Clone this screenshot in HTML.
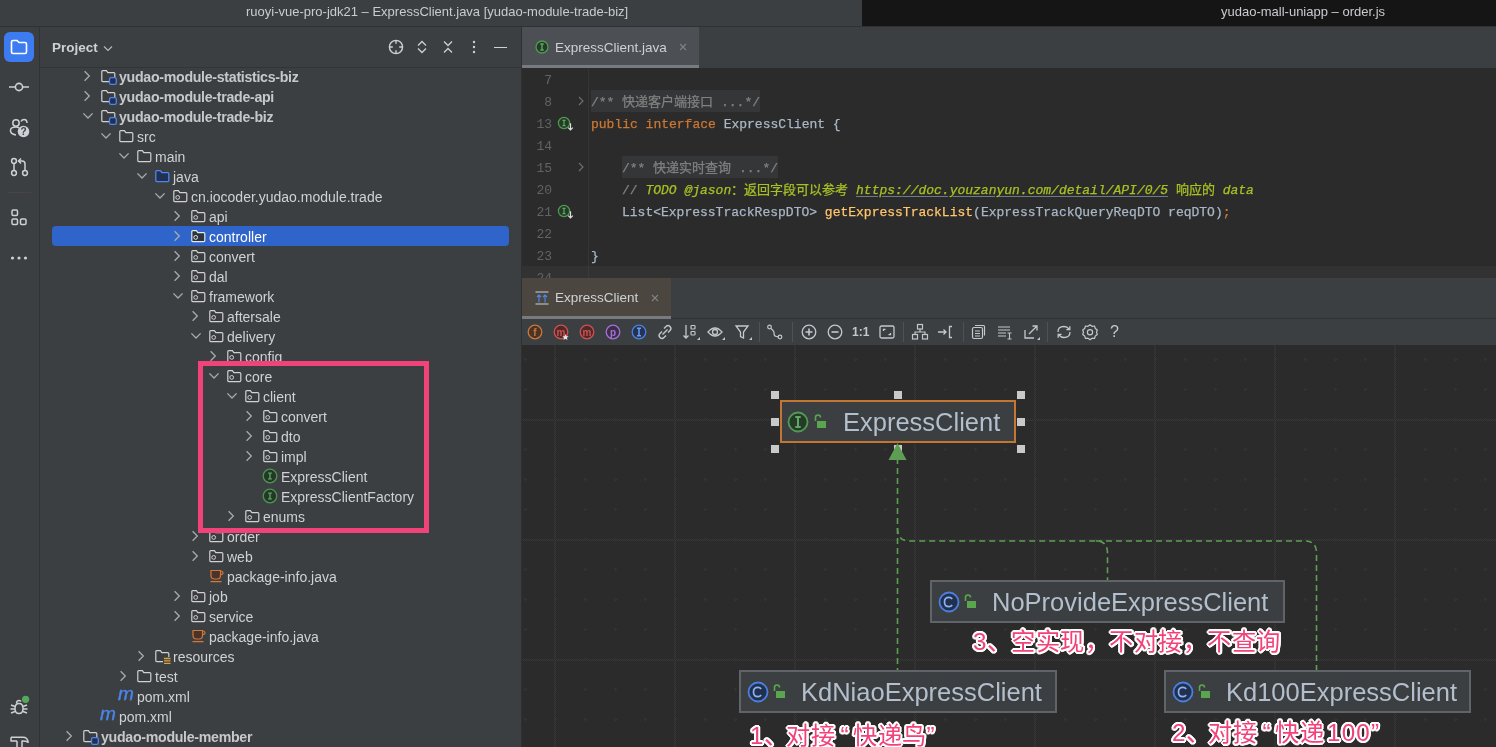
<!DOCTYPE html>
<html lang="zh-CN"><head><meta charset="utf-8"><style>
*{box-sizing:border-box;margin:0;padding:0}
html,body{width:1496px;height:747px;overflow:hidden;background:#3c3f41;font-family:"Liberation Sans",sans-serif;position:relative}
.a{position:absolute}
.tt,.rt,.mono,.ln,.dn,.ann,div.a{will-change:transform}
svg{position:absolute;overflow:visible}
.tt{position:absolute;font-size:13px;color:#c9cbcf;white-space:nowrap;line-height:15px}
.rt{position:absolute;font-size:14px;color:#cfd1d4;white-space:nowrap;line-height:16px}
.rb{font-weight:bold;font-size:14.2px;letter-spacing:-0.3px;color:#c6c8cb!important}
.mono{position:absolute;font-family:"Liberation Mono",monospace;font-size:13px;white-space:pre;line-height:16px;-webkit-text-stroke:0.25px currentColor}
.ln{position:absolute;font-family:"Liberation Mono",monospace;font-size:13px;color:#606366;text-align:right;width:40px;line-height:16px}
.dn{position:absolute;font-size:25.5px;color:#b3bfcd;white-space:nowrap;line-height:28px}
.ann{position:absolute;font-size:24.2px;letter-spacing:0.5px;font-weight:400;color:#f2427a;white-space:nowrap;line-height:28px;text-shadow:2.00px 0.00px 0 #fff,1.85px 0.77px 0 #fff,1.41px 1.41px 0 #fff,0.77px 1.85px 0 #fff,0.00px 2.00px 0 #fff,-0.77px 1.85px 0 #fff,-1.41px 1.41px 0 #fff,-1.85px 0.77px 0 #fff,-2.00px 0.00px 0 #fff,-1.85px -0.77px 0 #fff,-1.41px -1.41px 0 #fff,-0.77px -1.85px 0 #fff,-0.00px -2.00px 0 #fff,0.77px -1.85px 0 #fff,1.41px -1.41px 0 #fff,1.85px -0.77px 0 #fff,0.92px 0.38px 0 #fff,0.38px 0.92px 0 #fff,-0.38px 0.92px 0 #fff,-0.92px 0.38px 0 #fff,-0.92px -0.38px 0 #fff,-0.38px -0.92px 0 #fff,0.38px -0.92px 0 #fff,0.92px -0.38px 0 #fff}
.q{display:inline-block}
</style></head><body>
<div class="a" style="left:0;top:0;width:862px;height:26px;background:#3c3f41"></div>
<div class="a" style="left:862px;top:0;width:634px;height:26px;background:#151515"></div>
<div class="a" style="left:0;top:26px;width:1496px;height:1px;background:#2f3133"></div>
<div class="tt" style="left:246px;top:4px">ruoyi-vue-pro-jdk21 – ExpressClient.java [yudao-module-trade-biz]</div>
<div class="tt" style="left:1221px;top:4px">yudao-mall-uniapp – order.js</div>
<div class="a" style="left:39px;top:27px;width:1px;height:720px;background:#313335"></div>
<div class="a" style="left:4px;top:32px;width:30px;height:30px;background:#3d7cf0;border-radius:6px"></div>
<svg style="left:10px;top:39px" width="18" height="16" viewBox="0 0 18 16"><path d="M1.5 3 Q1.5 1.5 3 1.5 L7 1.5 L9 3.5 L15 3.5 Q16.5 3.5 16.5 5 L16.5 13 Q16.5 14.5 15 14.5 L3 14.5 Q1.5 14.5 1.5 13 Z" fill="none" stroke="#fff" stroke-width="1.6"/></svg>
<svg style="left:9px;top:80px" width="21" height="14" viewBox="0 0 21 14"><path d="M0 7 H6 M14 7 H20" stroke="#cdd0d4" stroke-width="1.6"/><circle cx="10" cy="7" r="3.6" fill="none" stroke="#cdd0d4" stroke-width="1.6"/></svg>
<svg style="left:9px;top:117px" width="22" height="22" viewBox="0 0 22 22"><circle cx="7" cy="6" r="3.2" fill="none" stroke="#cdd0d4" stroke-width="1.5"/><path d="M12 4.5 Q13 2.5 15 2.5 Q18 2.5 18 6" fill="none" stroke="#cdd0d4" stroke-width="1.5"/><path d="M7 18 Q1 17 1.5 13 Q2 10 7 10 Q9 10 10 11" fill="none" stroke="#cdd0d4" stroke-width="1.5"/><circle cx="14.5" cy="14.5" r="5.8" fill="#cdd0d4"/><text x="14.5" y="18.3" font-size="10" font-weight="bold" text-anchor="middle" fill="#3c3f41" font-family="Liberation Sans">?</text></svg>
<svg style="left:9px;top:156px" width="22" height="22" viewBox="0 0 22 22"><circle cx="5" cy="5" r="2.4" fill="none" stroke="#cdd0d4" stroke-width="1.5"/><circle cx="5" cy="17" r="2.4" fill="none" stroke="#cdd0d4" stroke-width="1.5"/><circle cx="16" cy="17" r="2.4" fill="none" stroke="#cdd0d4" stroke-width="1.5"/><path d="M5 7.4 V14.6 M16 14.6 V8 Q16 5 13 5 H10 M12 2.5 L9.5 5 L12 7.5" fill="none" stroke="#cdd0d4" stroke-width="1.5"/></svg>
<div class="a" style="left:8px;top:192px;width:23px;height:1px;background:#4a4446"></div>
<svg style="left:9px;top:207px" width="22" height="22" viewBox="0 0 22 22"><rect x="3" y="3" width="5.5" height="5.5" rx="1.2" fill="none" stroke="#cdd0d4" stroke-width="1.5"/><rect x="3" y="12" width="5.5" height="5.5" rx="1.2" fill="none" stroke="#cdd0d4" stroke-width="1.5"/><rect x="11.5" y="12" width="5.5" height="5.5" rx="1.2" fill="none" stroke="#cdd0d4" stroke-width="1.5"/></svg>
<svg style="left:9px;top:252px" width="22" height="12" viewBox="0 0 22 12"><circle cx="3.5" cy="6" r="1.6" fill="#cdd0d4"/><circle cx="10" cy="6" r="1.6" fill="#cdd0d4"/><circle cx="16.5" cy="6" r="1.6" fill="#cdd0d4"/></svg>
<svg style="left:8px;top:695px" width="24" height="24" viewBox="0 0 24 24"><path d="M11 18.5 Q7 18.5 7 13.5 Q7 8.5 11 8.5 Q15 8.5 15 13.5 Q15 18.5 11 18.5 Z" fill="none" stroke="#cdd0d4" stroke-width="1.5"/><path d="M8.5 8.5 Q8.5 5.5 11 5.5 Q12.5 5.5 13 6.5 M3 10 L7 11.5 M2.5 14 H7 M3 18 L7 16.5 M19 10 L15 11.5 M19.5 14 H15 M19 18 L15 16.5" fill="none" stroke="#cdd0d4" stroke-width="1.5"/><circle cx="17.6" cy="4.3" r="3.6" fill="#57a85c"/></svg>
<svg style="left:9px;top:733px" width="22" height="16" viewBox="0 0 22 16"><path d="M2 4.2 H14 Q18.5 4.2 19.2 9.3 Q17 8 14 8 H13 V16 M8 8 V16 M2 4.2 V8 H8" fill="none" stroke="#cdd0d4" stroke-width="1.5" stroke-linejoin="round"/></svg>
<div class="a" style="left:52px;top:40px;font-size:13.5px;font-weight:bold;color:#cfd1d4;line-height:16px">Project</div>
<svg style="left:103px;top:45px" width="10" height="7" viewBox="0 0 10 7"><path d="M1 1.5 L5 5.5 L9 1.5" fill="none" stroke="#b4b7bb" stroke-width="1.2"/></svg>
<div class="a" style="left:40px;top:67px;width:481px;height:1px;background:#323436"></div>
<svg style="left:388px;top:39px" width="16" height="16" viewBox="0 0 16 16"><circle cx="8" cy="8" r="6.6" fill="none" stroke="#cdd0d4" stroke-width="1.4"/><path d="M8 1.5 V4.8 M8 11.2 V14.5 M1.5 8 H4.8 M11.2 8 H14.5" stroke="#cdd0d4" stroke-width="1.4"/></svg>
<svg style="left:416px;top:39px" width="12" height="16" viewBox="0 0 12 16"><path d="M2 6.5 L6 2.5 L10 6.5 M2 9.5 L6 13.5 L10 9.5" fill="none" stroke="#cdd0d4" stroke-width="1.3"/></svg>
<svg style="left:442px;top:39px" width="12" height="16" viewBox="0 0 12 16"><path d="M2 2.5 L6 6.5 L10 2.5 M2 13.5 L6 9.5 L10 13.5" fill="none" stroke="#cdd0d4" stroke-width="1.3"/></svg>
<svg style="left:470px;top:39px" width="8" height="16" viewBox="0 0 8 16"><circle cx="4" cy="3" r="1.2" fill="#cdd0d4"/><circle cx="4" cy="8" r="1.2" fill="#cdd0d4"/><circle cx="4" cy="13" r="1.2" fill="#cdd0d4"/></svg>
<div class="a" style="left:494px;top:46.5px;width:13px;height:1.2px;background:#cdd0d4"></div>
<div class="a" style="left:52px;top:226px;width:457px;height:20px;background:#2f65ca;border-radius:4px"></div>
<svg class="a" style="left:81px;top:70px" width="12" height="12" viewBox="0 0 12 12"><path d="M3.6 1.3 L8.3 6 L3.6 10.7" fill="none" stroke="#a8abb0" stroke-width="1.3"/></svg>
<svg class="a" style="left:101px;top:68px" width="16" height="16" viewBox="0 0 16 16"><path d="M0.8 3.6 Q0.8 2.6 1.8 2.6 L5.4 2.6 L6.8 4.6 L12.8 4.6 Q13.8 4.6 13.8 5.6 L13.8 12.6 Q13.8 13.6 12.8 13.6 L1.8 13.6 Q0.8 13.6 0.8 12.6 Z" fill="#3a3c3f" stroke="#cfd1d4" stroke-width="1.2"/><rect x="8.5" y="9.6" width="6.8" height="6.8" rx="1.6" fill="#233052" stroke="#4d87f0" stroke-width="1.3"/></svg>
<div class="rt rb" style="left:119px;top:69px;color:#cfd1d4">yudao-module-statistics-biz</div>
<svg class="a" style="left:81px;top:90px" width="12" height="12" viewBox="0 0 12 12"><path d="M3.6 1.3 L8.3 6 L3.6 10.7" fill="none" stroke="#a8abb0" stroke-width="1.3"/></svg>
<svg class="a" style="left:101px;top:88px" width="16" height="16" viewBox="0 0 16 16"><path d="M0.8 3.6 Q0.8 2.6 1.8 2.6 L5.4 2.6 L6.8 4.6 L12.8 4.6 Q13.8 4.6 13.8 5.6 L13.8 12.6 Q13.8 13.6 12.8 13.6 L1.8 13.6 Q0.8 13.6 0.8 12.6 Z" fill="#3a3c3f" stroke="#cfd1d4" stroke-width="1.2"/><rect x="8.5" y="9.6" width="6.8" height="6.8" rx="1.6" fill="#233052" stroke="#4d87f0" stroke-width="1.3"/></svg>
<div class="rt rb" style="left:119px;top:89px;color:#cfd1d4">yudao-module-trade-api</div>
<svg class="a" style="left:81px;top:110px" width="12" height="12" viewBox="0 0 12 12"><path d="M2.4 3.4 L7 8 L11.6 3.4" fill="none" stroke="#a8abb0" stroke-width="1.3"/></svg>
<svg class="a" style="left:101px;top:108px" width="16" height="16" viewBox="0 0 16 16"><path d="M0.8 3.6 Q0.8 2.6 1.8 2.6 L5.4 2.6 L6.8 4.6 L12.8 4.6 Q13.8 4.6 13.8 5.6 L13.8 12.6 Q13.8 13.6 12.8 13.6 L1.8 13.6 Q0.8 13.6 0.8 12.6 Z" fill="#3a3c3f" stroke="#cfd1d4" stroke-width="1.2"/><rect x="8.5" y="9.6" width="6.8" height="6.8" rx="1.6" fill="#233052" stroke="#4d87f0" stroke-width="1.3"/></svg>
<div class="rt rb" style="left:119px;top:109px;color:#cfd1d4">yudao-module-trade-biz</div>
<svg class="a" style="left:99px;top:130px" width="12" height="12" viewBox="0 0 12 12"><path d="M2.4 3.4 L7 8 L11.6 3.4" fill="none" stroke="#a8abb0" stroke-width="1.3"/></svg>
<svg class="a" style="left:119px;top:128px" width="16" height="16" viewBox="0 0 16 16"><path d="M0.8 3.6 Q0.8 2.6 1.8 2.6 L5.4 2.6 L6.8 4.6 L12.8 4.6 Q13.8 4.6 13.8 5.6 L13.8 12.6 Q13.8 13.6 12.8 13.6 L1.8 13.6 Q0.8 13.6 0.8 12.6 Z" fill="#3a3c3f" stroke="#cfd1d4" stroke-width="1.2"/></svg>
<div class="rt" style="left:137px;top:129px;color:#cfd1d4">src</div>
<svg class="a" style="left:117px;top:150px" width="12" height="12" viewBox="0 0 12 12"><path d="M2.4 3.4 L7 8 L11.6 3.4" fill="none" stroke="#a8abb0" stroke-width="1.3"/></svg>
<svg class="a" style="left:137px;top:148px" width="16" height="16" viewBox="0 0 16 16"><path d="M0.8 3.6 Q0.8 2.6 1.8 2.6 L5.4 2.6 L6.8 4.6 L12.8 4.6 Q13.8 4.6 13.8 5.6 L13.8 12.6 Q13.8 13.6 12.8 13.6 L1.8 13.6 Q0.8 13.6 0.8 12.6 Z" fill="#3a3c3f" stroke="#cfd1d4" stroke-width="1.2"/></svg>
<div class="rt" style="left:155px;top:149px;color:#cfd1d4">main</div>
<svg class="a" style="left:135px;top:170px" width="12" height="12" viewBox="0 0 12 12"><path d="M2.4 3.4 L7 8 L11.6 3.4" fill="none" stroke="#a8abb0" stroke-width="1.3"/></svg>
<svg class="a" style="left:155px;top:168px" width="16" height="16" viewBox="0 0 16 16"><path d="M0.8 3.6 Q0.8 2.6 1.8 2.6 L5.4 2.6 L6.8 4.6 L12.8 4.6 Q13.8 4.6 13.8 5.6 L13.8 12.6 Q13.8 13.6 12.8 13.6 L1.8 13.6 Q0.8 13.6 0.8 12.6 Z" fill="#233052" stroke="#4d87f0" stroke-width="1.3"/></svg>
<div class="rt" style="left:173px;top:169px;color:#cfd1d4">java</div>
<svg class="a" style="left:153px;top:190px" width="12" height="12" viewBox="0 0 12 12"><path d="M2.4 3.4 L7 8 L11.6 3.4" fill="none" stroke="#a8abb0" stroke-width="1.3"/></svg>
<svg class="a" style="left:173px;top:188px" width="16" height="16" viewBox="0 0 16 16"><path d="M0.8 3.6 Q0.8 2.6 1.8 2.6 L5.4 2.6 L6.8 4.6 L12.8 4.6 Q13.8 4.6 13.8 5.6 L13.8 12.6 Q13.8 13.6 12.8 13.6 L1.8 13.6 Q0.8 13.6 0.8 12.6 Z" fill="#3a3c3f" stroke="#cfd1d4" stroke-width="1.2"/><circle cx="4.7" cy="9.4" r="1.9" fill="none" stroke="#cfd1d4" stroke-width="1"/></svg>
<div class="rt" style="left:191px;top:189px;color:#cfd1d4">cn.iocoder.yudao.module.trade</div>
<svg class="a" style="left:171px;top:210px" width="12" height="12" viewBox="0 0 12 12"><path d="M3.6 1.3 L8.3 6 L3.6 10.7" fill="none" stroke="#a8abb0" stroke-width="1.3"/></svg>
<svg class="a" style="left:191px;top:208px" width="16" height="16" viewBox="0 0 16 16"><path d="M0.8 3.6 Q0.8 2.6 1.8 2.6 L5.4 2.6 L6.8 4.6 L12.8 4.6 Q13.8 4.6 13.8 5.6 L13.8 12.6 Q13.8 13.6 12.8 13.6 L1.8 13.6 Q0.8 13.6 0.8 12.6 Z" fill="#3a3c3f" stroke="#cfd1d4" stroke-width="1.2"/><circle cx="4.7" cy="9.4" r="1.9" fill="none" stroke="#cfd1d4" stroke-width="1"/></svg>
<div class="rt" style="left:209px;top:209px;color:#cfd1d4">api</div>
<svg class="a" style="left:171px;top:230px" width="12" height="12" viewBox="0 0 12 12"><path d="M3.6 1.3 L8.3 6 L3.6 10.7" fill="none" stroke="#a8abb0" stroke-width="1.3"/></svg>
<svg class="a" style="left:191px;top:228px" width="16" height="16" viewBox="0 0 16 16"><path d="M0.8 3.6 Q0.8 2.6 1.8 2.6 L5.4 2.6 L6.8 4.6 L12.8 4.6 Q13.8 4.6 13.8 5.6 L13.8 12.6 Q13.8 13.6 12.8 13.6 L1.8 13.6 Q0.8 13.6 0.8 12.6 Z" fill="#2c3440" stroke="#e6e8ea" stroke-width="1.2"/><circle cx="4.7" cy="9.4" r="1.9" fill="none" stroke="#e6e8ea" stroke-width="1"/></svg>
<div class="rt" style="left:209px;top:229px;color:#ffffff">controller</div>
<svg class="a" style="left:171px;top:250px" width="12" height="12" viewBox="0 0 12 12"><path d="M3.6 1.3 L8.3 6 L3.6 10.7" fill="none" stroke="#a8abb0" stroke-width="1.3"/></svg>
<svg class="a" style="left:191px;top:248px" width="16" height="16" viewBox="0 0 16 16"><path d="M0.8 3.6 Q0.8 2.6 1.8 2.6 L5.4 2.6 L6.8 4.6 L12.8 4.6 Q13.8 4.6 13.8 5.6 L13.8 12.6 Q13.8 13.6 12.8 13.6 L1.8 13.6 Q0.8 13.6 0.8 12.6 Z" fill="#3a3c3f" stroke="#cfd1d4" stroke-width="1.2"/><circle cx="4.7" cy="9.4" r="1.9" fill="none" stroke="#cfd1d4" stroke-width="1"/></svg>
<div class="rt" style="left:209px;top:249px;color:#cfd1d4">convert</div>
<svg class="a" style="left:171px;top:270px" width="12" height="12" viewBox="0 0 12 12"><path d="M3.6 1.3 L8.3 6 L3.6 10.7" fill="none" stroke="#a8abb0" stroke-width="1.3"/></svg>
<svg class="a" style="left:191px;top:268px" width="16" height="16" viewBox="0 0 16 16"><path d="M0.8 3.6 Q0.8 2.6 1.8 2.6 L5.4 2.6 L6.8 4.6 L12.8 4.6 Q13.8 4.6 13.8 5.6 L13.8 12.6 Q13.8 13.6 12.8 13.6 L1.8 13.6 Q0.8 13.6 0.8 12.6 Z" fill="#3a3c3f" stroke="#cfd1d4" stroke-width="1.2"/><circle cx="4.7" cy="9.4" r="1.9" fill="none" stroke="#cfd1d4" stroke-width="1"/></svg>
<div class="rt" style="left:209px;top:269px;color:#cfd1d4">dal</div>
<svg class="a" style="left:171px;top:290px" width="12" height="12" viewBox="0 0 12 12"><path d="M2.4 3.4 L7 8 L11.6 3.4" fill="none" stroke="#a8abb0" stroke-width="1.3"/></svg>
<svg class="a" style="left:191px;top:288px" width="16" height="16" viewBox="0 0 16 16"><path d="M0.8 3.6 Q0.8 2.6 1.8 2.6 L5.4 2.6 L6.8 4.6 L12.8 4.6 Q13.8 4.6 13.8 5.6 L13.8 12.6 Q13.8 13.6 12.8 13.6 L1.8 13.6 Q0.8 13.6 0.8 12.6 Z" fill="#3a3c3f" stroke="#cfd1d4" stroke-width="1.2"/><circle cx="4.7" cy="9.4" r="1.9" fill="none" stroke="#cfd1d4" stroke-width="1"/></svg>
<div class="rt" style="left:209px;top:289px;color:#cfd1d4">framework</div>
<svg class="a" style="left:189px;top:310px" width="12" height="12" viewBox="0 0 12 12"><path d="M3.6 1.3 L8.3 6 L3.6 10.7" fill="none" stroke="#a8abb0" stroke-width="1.3"/></svg>
<svg class="a" style="left:209px;top:308px" width="16" height="16" viewBox="0 0 16 16"><path d="M0.8 3.6 Q0.8 2.6 1.8 2.6 L5.4 2.6 L6.8 4.6 L12.8 4.6 Q13.8 4.6 13.8 5.6 L13.8 12.6 Q13.8 13.6 12.8 13.6 L1.8 13.6 Q0.8 13.6 0.8 12.6 Z" fill="#3a3c3f" stroke="#cfd1d4" stroke-width="1.2"/><circle cx="4.7" cy="9.4" r="1.9" fill="none" stroke="#cfd1d4" stroke-width="1"/></svg>
<div class="rt" style="left:227px;top:309px;color:#cfd1d4">aftersale</div>
<svg class="a" style="left:189px;top:330px" width="12" height="12" viewBox="0 0 12 12"><path d="M2.4 3.4 L7 8 L11.6 3.4" fill="none" stroke="#a8abb0" stroke-width="1.3"/></svg>
<svg class="a" style="left:209px;top:328px" width="16" height="16" viewBox="0 0 16 16"><path d="M0.8 3.6 Q0.8 2.6 1.8 2.6 L5.4 2.6 L6.8 4.6 L12.8 4.6 Q13.8 4.6 13.8 5.6 L13.8 12.6 Q13.8 13.6 12.8 13.6 L1.8 13.6 Q0.8 13.6 0.8 12.6 Z" fill="#3a3c3f" stroke="#cfd1d4" stroke-width="1.2"/><circle cx="4.7" cy="9.4" r="1.9" fill="none" stroke="#cfd1d4" stroke-width="1"/></svg>
<div class="rt" style="left:227px;top:329px;color:#cfd1d4">delivery</div>
<svg class="a" style="left:207px;top:350px" width="12" height="12" viewBox="0 0 12 12"><path d="M3.6 1.3 L8.3 6 L3.6 10.7" fill="none" stroke="#a8abb0" stroke-width="1.3"/></svg>
<svg class="a" style="left:227px;top:348px" width="16" height="16" viewBox="0 0 16 16"><path d="M0.8 3.6 Q0.8 2.6 1.8 2.6 L5.4 2.6 L6.8 4.6 L12.8 4.6 Q13.8 4.6 13.8 5.6 L13.8 12.6 Q13.8 13.6 12.8 13.6 L1.8 13.6 Q0.8 13.6 0.8 12.6 Z" fill="#3a3c3f" stroke="#cfd1d4" stroke-width="1.2"/><circle cx="4.7" cy="9.4" r="1.9" fill="none" stroke="#cfd1d4" stroke-width="1"/></svg>
<div class="rt" style="left:245px;top:349px;color:#cfd1d4">config</div>
<svg class="a" style="left:207px;top:370px" width="12" height="12" viewBox="0 0 12 12"><path d="M2.4 3.4 L7 8 L11.6 3.4" fill="none" stroke="#a8abb0" stroke-width="1.3"/></svg>
<svg class="a" style="left:227px;top:368px" width="16" height="16" viewBox="0 0 16 16"><path d="M0.8 3.6 Q0.8 2.6 1.8 2.6 L5.4 2.6 L6.8 4.6 L12.8 4.6 Q13.8 4.6 13.8 5.6 L13.8 12.6 Q13.8 13.6 12.8 13.6 L1.8 13.6 Q0.8 13.6 0.8 12.6 Z" fill="#3a3c3f" stroke="#cfd1d4" stroke-width="1.2"/><circle cx="4.7" cy="9.4" r="1.9" fill="none" stroke="#cfd1d4" stroke-width="1"/></svg>
<div class="rt" style="left:245px;top:369px;color:#cfd1d4">core</div>
<svg class="a" style="left:225px;top:390px" width="12" height="12" viewBox="0 0 12 12"><path d="M2.4 3.4 L7 8 L11.6 3.4" fill="none" stroke="#a8abb0" stroke-width="1.3"/></svg>
<svg class="a" style="left:245px;top:388px" width="16" height="16" viewBox="0 0 16 16"><path d="M0.8 3.6 Q0.8 2.6 1.8 2.6 L5.4 2.6 L6.8 4.6 L12.8 4.6 Q13.8 4.6 13.8 5.6 L13.8 12.6 Q13.8 13.6 12.8 13.6 L1.8 13.6 Q0.8 13.6 0.8 12.6 Z" fill="#3a3c3f" stroke="#cfd1d4" stroke-width="1.2"/><circle cx="4.7" cy="9.4" r="1.9" fill="none" stroke="#cfd1d4" stroke-width="1"/></svg>
<div class="rt" style="left:263px;top:389px;color:#cfd1d4">client</div>
<svg class="a" style="left:243px;top:410px" width="12" height="12" viewBox="0 0 12 12"><path d="M3.6 1.3 L8.3 6 L3.6 10.7" fill="none" stroke="#a8abb0" stroke-width="1.3"/></svg>
<svg class="a" style="left:263px;top:408px" width="16" height="16" viewBox="0 0 16 16"><path d="M0.8 3.6 Q0.8 2.6 1.8 2.6 L5.4 2.6 L6.8 4.6 L12.8 4.6 Q13.8 4.6 13.8 5.6 L13.8 12.6 Q13.8 13.6 12.8 13.6 L1.8 13.6 Q0.8 13.6 0.8 12.6 Z" fill="#3a3c3f" stroke="#cfd1d4" stroke-width="1.2"/><circle cx="4.7" cy="9.4" r="1.9" fill="none" stroke="#cfd1d4" stroke-width="1"/></svg>
<div class="rt" style="left:281px;top:409px;color:#cfd1d4">convert</div>
<svg class="a" style="left:243px;top:430px" width="12" height="12" viewBox="0 0 12 12"><path d="M3.6 1.3 L8.3 6 L3.6 10.7" fill="none" stroke="#a8abb0" stroke-width="1.3"/></svg>
<svg class="a" style="left:263px;top:428px" width="16" height="16" viewBox="0 0 16 16"><path d="M0.8 3.6 Q0.8 2.6 1.8 2.6 L5.4 2.6 L6.8 4.6 L12.8 4.6 Q13.8 4.6 13.8 5.6 L13.8 12.6 Q13.8 13.6 12.8 13.6 L1.8 13.6 Q0.8 13.6 0.8 12.6 Z" fill="#3a3c3f" stroke="#cfd1d4" stroke-width="1.2"/><circle cx="4.7" cy="9.4" r="1.9" fill="none" stroke="#cfd1d4" stroke-width="1"/></svg>
<div class="rt" style="left:281px;top:429px;color:#cfd1d4">dto</div>
<svg class="a" style="left:243px;top:450px" width="12" height="12" viewBox="0 0 12 12"><path d="M3.6 1.3 L8.3 6 L3.6 10.7" fill="none" stroke="#a8abb0" stroke-width="1.3"/></svg>
<svg class="a" style="left:263px;top:448px" width="16" height="16" viewBox="0 0 16 16"><path d="M0.8 3.6 Q0.8 2.6 1.8 2.6 L5.4 2.6 L6.8 4.6 L12.8 4.6 Q13.8 4.6 13.8 5.6 L13.8 12.6 Q13.8 13.6 12.8 13.6 L1.8 13.6 Q0.8 13.6 0.8 12.6 Z" fill="#3a3c3f" stroke="#cfd1d4" stroke-width="1.2"/><circle cx="4.7" cy="9.4" r="1.9" fill="none" stroke="#cfd1d4" stroke-width="1"/></svg>
<div class="rt" style="left:281px;top:449px;color:#cfd1d4">impl</div>
<svg class="a" style="left:263px;top:468px" width="16" height="16" viewBox="0 0 16 16"><circle cx="7" cy="8" r="6.8" fill="#243826" stroke="#4c944f" stroke-width="1.3"/><path d="M5.2 4.8 Q7 5.6 8.8 4.8 M7 5.2 V10.8 M5.2 11.2 Q7 10.4 8.8 11.2" fill="none" stroke="#5e9f62" stroke-width="1.4"/></svg>
<div class="rt" style="left:281px;top:469px;color:#cfd1d4">ExpressClient</div>
<svg class="a" style="left:263px;top:488px" width="16" height="16" viewBox="0 0 16 16"><circle cx="7" cy="8" r="6.8" fill="#243826" stroke="#4c944f" stroke-width="1.3"/><path d="M5.2 4.8 Q7 5.6 8.8 4.8 M7 5.2 V10.8 M5.2 11.2 Q7 10.4 8.8 11.2" fill="none" stroke="#5e9f62" stroke-width="1.4"/></svg>
<div class="rt" style="left:281px;top:489px;color:#cfd1d4">ExpressClientFactory</div>
<svg class="a" style="left:225px;top:510px" width="12" height="12" viewBox="0 0 12 12"><path d="M3.6 1.3 L8.3 6 L3.6 10.7" fill="none" stroke="#a8abb0" stroke-width="1.3"/></svg>
<svg class="a" style="left:245px;top:508px" width="16" height="16" viewBox="0 0 16 16"><path d="M0.8 3.6 Q0.8 2.6 1.8 2.6 L5.4 2.6 L6.8 4.6 L12.8 4.6 Q13.8 4.6 13.8 5.6 L13.8 12.6 Q13.8 13.6 12.8 13.6 L1.8 13.6 Q0.8 13.6 0.8 12.6 Z" fill="#3a3c3f" stroke="#cfd1d4" stroke-width="1.2"/><circle cx="4.7" cy="9.4" r="1.9" fill="none" stroke="#cfd1d4" stroke-width="1"/></svg>
<div class="rt" style="left:263px;top:509px;color:#cfd1d4">enums</div>
<svg class="a" style="left:189px;top:530px" width="12" height="12" viewBox="0 0 12 12"><path d="M3.6 1.3 L8.3 6 L3.6 10.7" fill="none" stroke="#a8abb0" stroke-width="1.3"/></svg>
<svg class="a" style="left:209px;top:528px" width="16" height="16" viewBox="0 0 16 16"><path d="M0.8 3.6 Q0.8 2.6 1.8 2.6 L5.4 2.6 L6.8 4.6 L12.8 4.6 Q13.8 4.6 13.8 5.6 L13.8 12.6 Q13.8 13.6 12.8 13.6 L1.8 13.6 Q0.8 13.6 0.8 12.6 Z" fill="#3a3c3f" stroke="#cfd1d4" stroke-width="1.2"/><circle cx="4.7" cy="9.4" r="1.9" fill="none" stroke="#cfd1d4" stroke-width="1"/></svg>
<div class="rt" style="left:227px;top:529px;color:#cfd1d4">order</div>
<svg class="a" style="left:189px;top:550px" width="12" height="12" viewBox="0 0 12 12"><path d="M3.6 1.3 L8.3 6 L3.6 10.7" fill="none" stroke="#a8abb0" stroke-width="1.3"/></svg>
<svg class="a" style="left:209px;top:548px" width="16" height="16" viewBox="0 0 16 16"><path d="M0.8 3.6 Q0.8 2.6 1.8 2.6 L5.4 2.6 L6.8 4.6 L12.8 4.6 Q13.8 4.6 13.8 5.6 L13.8 12.6 Q13.8 13.6 12.8 13.6 L1.8 13.6 Q0.8 13.6 0.8 12.6 Z" fill="#3a3c3f" stroke="#cfd1d4" stroke-width="1.2"/><circle cx="4.7" cy="9.4" r="1.9" fill="none" stroke="#cfd1d4" stroke-width="1"/></svg>
<div class="rt" style="left:227px;top:549px;color:#cfd1d4">web</div>
<svg class="a" style="left:209px;top:568px" width="16" height="16" viewBox="0 0 16 16"><path d="M2 2.5 H11.5 V7.5 Q11.5 11 8 11 H5.5 Q2 11 2 7.5 Z" fill="#4a3328" stroke="#d4773a" stroke-width="1.2"/><path d="M11.5 3 Q14 3 14 5 Q14 6.5 11.5 6.5" fill="none" stroke="#d4773a" stroke-width="1.1"/><path d="M1.5 13.6 H12.5" stroke="#d4773a" stroke-width="1.3"/></svg>
<div class="rt" style="left:227px;top:569px;color:#cfd1d4">package-info.java</div>
<svg class="a" style="left:171px;top:590px" width="12" height="12" viewBox="0 0 12 12"><path d="M3.6 1.3 L8.3 6 L3.6 10.7" fill="none" stroke="#a8abb0" stroke-width="1.3"/></svg>
<svg class="a" style="left:191px;top:588px" width="16" height="16" viewBox="0 0 16 16"><path d="M0.8 3.6 Q0.8 2.6 1.8 2.6 L5.4 2.6 L6.8 4.6 L12.8 4.6 Q13.8 4.6 13.8 5.6 L13.8 12.6 Q13.8 13.6 12.8 13.6 L1.8 13.6 Q0.8 13.6 0.8 12.6 Z" fill="#3a3c3f" stroke="#cfd1d4" stroke-width="1.2"/><circle cx="4.7" cy="9.4" r="1.9" fill="none" stroke="#cfd1d4" stroke-width="1"/></svg>
<div class="rt" style="left:209px;top:589px;color:#cfd1d4">job</div>
<svg class="a" style="left:171px;top:610px" width="12" height="12" viewBox="0 0 12 12"><path d="M3.6 1.3 L8.3 6 L3.6 10.7" fill="none" stroke="#a8abb0" stroke-width="1.3"/></svg>
<svg class="a" style="left:191px;top:608px" width="16" height="16" viewBox="0 0 16 16"><path d="M0.8 3.6 Q0.8 2.6 1.8 2.6 L5.4 2.6 L6.8 4.6 L12.8 4.6 Q13.8 4.6 13.8 5.6 L13.8 12.6 Q13.8 13.6 12.8 13.6 L1.8 13.6 Q0.8 13.6 0.8 12.6 Z" fill="#3a3c3f" stroke="#cfd1d4" stroke-width="1.2"/><circle cx="4.7" cy="9.4" r="1.9" fill="none" stroke="#cfd1d4" stroke-width="1"/></svg>
<div class="rt" style="left:209px;top:609px;color:#cfd1d4">service</div>
<svg class="a" style="left:191px;top:628px" width="16" height="16" viewBox="0 0 16 16"><path d="M2 2.5 H11.5 V7.5 Q11.5 11 8 11 H5.5 Q2 11 2 7.5 Z" fill="#4a3328" stroke="#d4773a" stroke-width="1.2"/><path d="M11.5 3 Q14 3 14 5 Q14 6.5 11.5 6.5" fill="none" stroke="#d4773a" stroke-width="1.1"/><path d="M1.5 13.6 H12.5" stroke="#d4773a" stroke-width="1.3"/></svg>
<div class="rt" style="left:209px;top:629px;color:#cfd1d4">package-info.java</div>
<svg class="a" style="left:135px;top:650px" width="12" height="12" viewBox="0 0 12 12"><path d="M3.6 1.3 L8.3 6 L3.6 10.7" fill="none" stroke="#a8abb0" stroke-width="1.3"/></svg>
<svg class="a" style="left:155px;top:648px" width="16" height="16" viewBox="0 0 16 16"><path d="M0.8 3.6 Q0.8 2.6 1.8 2.6 L5.4 2.6 L6.8 4.6 L12.8 4.6 Q13.8 4.6 13.8 5.6 L13.8 12.6 Q13.8 13.6 12.8 13.6 L1.8 13.6 Q0.8 13.6 0.8 12.6 Z" fill="#3a3c3f" stroke="#cfd1d4" stroke-width="1.2"/><rect x="8" y="9" width="8.5" height="8" fill="#3c3f41"/><path d="M9 10.5 H15.5 M9 12.9 H15.5 M9 15.3 H15.5" stroke="#d9a343" stroke-width="1.3"/></svg>
<div class="rt" style="left:173px;top:649px;color:#cfd1d4">resources</div>
<svg class="a" style="left:117px;top:670px" width="12" height="12" viewBox="0 0 12 12"><path d="M3.6 1.3 L8.3 6 L3.6 10.7" fill="none" stroke="#a8abb0" stroke-width="1.3"/></svg>
<svg class="a" style="left:137px;top:668px" width="16" height="16" viewBox="0 0 16 16"><path d="M0.8 3.6 Q0.8 2.6 1.8 2.6 L5.4 2.6 L6.8 4.6 L12.8 4.6 Q13.8 4.6 13.8 5.6 L13.8 12.6 Q13.8 13.6 12.8 13.6 L1.8 13.6 Q0.8 13.6 0.8 12.6 Z" fill="#3a3c3f" stroke="#cfd1d4" stroke-width="1.2"/></svg>
<div class="rt" style="left:155px;top:669px;color:#cfd1d4">test</div>
<div class="a" style="left:118px;top:684px;font:italic 19px 'Liberation Sans';color:#4a86e8;line-height:20px;-webkit-text-stroke:0.4px #4a86e8">m</div>
<div class="rt" style="left:137px;top:689px;color:#cfd1d4">pom.xml</div>
<div class="a" style="left:100px;top:704px;font:italic 19px 'Liberation Sans';color:#4a86e8;line-height:20px;-webkit-text-stroke:0.4px #4a86e8">m</div>
<div class="rt" style="left:119px;top:709px;color:#cfd1d4">pom.xml</div>
<svg class="a" style="left:63px;top:730px" width="12" height="12" viewBox="0 0 12 12"><path d="M3.6 1.3 L8.3 6 L3.6 10.7" fill="none" stroke="#a8abb0" stroke-width="1.3"/></svg>
<svg class="a" style="left:83px;top:728px" width="16" height="16" viewBox="0 0 16 16"><path d="M0.8 3.6 Q0.8 2.6 1.8 2.6 L5.4 2.6 L6.8 4.6 L12.8 4.6 Q13.8 4.6 13.8 5.6 L13.8 12.6 Q13.8 13.6 12.8 13.6 L1.8 13.6 Q0.8 13.6 0.8 12.6 Z" fill="#3a3c3f" stroke="#cfd1d4" stroke-width="1.2"/><rect x="8.5" y="9.6" width="6.8" height="6.8" rx="1.6" fill="#233052" stroke="#4d87f0" stroke-width="1.3"/></svg>
<div class="rt rb" style="left:101px;top:729px;color:#cfd1d4">yudao-module-member</div>
<div class="a" style="left:198px;top:361px;width:231px;height:172px;border:5px solid #f2427a"></div>
<div class="a" style="left:521px;top:27px;width:1px;height:720px;background:#2e3032"></div>
<div class="a" style="left:522px;top:27px;width:974px;height:41px;background:#3c3f41"></div>
<div class="a" style="left:522px;top:27px;width:177px;height:38px;background:#4c4f53"></div>
<div class="a" style="left:522px;top:65px;width:177px;height:3px;background:#777b80"></div>
<svg style="left:535px;top:40px" width="14" height="14" viewBox="0 0 14 14"><circle cx="7" cy="7" r="6" fill="#253b27" stroke="#4f9b52" stroke-width="1.3"/><path d="M5.3 4 H8.7 M7 4 V10 M5.3 10 H8.7" stroke="#62a765" stroke-width="1.4"/></svg>
<div class="tt" style="left:555px;top:40px;color:#cfd1d4;font-size:13.5px">ExpressClient.java</div>
<svg style="left:679px;top:43px" width="8" height="8" viewBox="0 0 8 8"><path d="M1 1 L7 7 M7 1 L1 7" stroke="#7f8286" stroke-width="1.1"/></svg>
<div class="a" style="left:522px;top:68px;width:974px;height:198px;background:#2b2b2b"></div>
<div class="a" style="left:588px;top:68px;width:1px;height:198px;background:#353535"></div>
<div class="a" style="left:522px;top:266px;width:974px;height:12px;background:#323232"></div>
<div class="a" style="left:588px;top:266px;width:1px;height:12px;background:#3a3a3a"></div>
<div class="ln" style="left:512px;top:73px">7</div>
<div class="ln" style="left:512px;top:95px">8</div>
<div class="ln" style="left:512px;top:117px">13</div>
<div class="ln" style="left:512px;top:139px">14</div>
<div class="ln" style="left:512px;top:161px">15</div>
<div class="ln" style="left:512px;top:183px">20</div>
<div class="ln" style="left:512px;top:205px">21</div>
<div class="ln" style="left:512px;top:227px">22</div>
<div class="ln" style="left:512px;top:249px">23</div>
<div class="ln" style="left:512px;top:271px;height:7px;overflow:hidden">24</div>
<svg style="left:577px;top:96px" width="8" height="10" viewBox="0 0 8 10"><path d="M2 1 L6 5 L2 9" fill="none" stroke="#6e7174" stroke-width="1.1"/></svg>
<svg style="left:577px;top:162px" width="8" height="10" viewBox="0 0 8 10"><path d="M2 1 L6 5 L2 9" fill="none" stroke="#6e7174" stroke-width="1.1"/></svg>
<svg style="left:557px;top:116px" width="18" height="18" viewBox="0 0 18 18"><circle cx="7" cy="7" r="5.6" fill="#253b27" stroke="#4f9b52" stroke-width="1.2"/><path d="M5.5 4.3 H8.5 M7 4.3 V9.7 M5.5 9.7 H8.5" stroke="#62a765" stroke-width="1.2"/><path d="M13.5 7.2 V14 M11.2 11.7 L13.5 14 L15.8 11.7" fill="none" stroke="#e0e0e0" stroke-width="1.2"/></svg>
<svg style="left:557px;top:204px" width="18" height="18" viewBox="0 0 18 18"><circle cx="7" cy="7" r="5.6" fill="#253b27" stroke="#4f9b52" stroke-width="1.2"/><path d="M5.5 4.3 H8.5 M7 4.3 V9.7 M5.5 9.7 H8.5" stroke="#62a765" stroke-width="1.2"/><path d="M13.5 7.2 V14 M11.2 11.7 L13.5 14 L15.8 11.7" fill="none" stroke="#e0e0e0" stroke-width="1.2"/></svg>
<div class="a" style="left:591px;top:90px;width:169px;height:22px;background:#353637"></div>
<div class="mono" style="left:591px;top:95px"><span style="color:#808080;">/** 快递客户端接口 ...*/</span></div>
<div class="mono" style="left:591px;top:117px"><span style="color:#cc7832;">public </span><span style="color:#cc7832;">interface </span><span style="color:#a9b7c6;">ExpressClient {</span></div>
<div class="a" style="left:622px;top:156px;width:156px;height:22px;background:#353637"></div>
<div class="mono" style="left:622.2px;top:161px"><span style="color:#808080;">/** 快递实时查询 ...*/</span></div>
<div class="mono" style="left:622.2px;top:183px"><span style="color:#808080;">// </span><span style="color:#a8c023;font-style:italic;">TODO @jason</span><span style="color:#a8c023;">：返回字段可以参考 </span><span style="color:#a8c023;font-style:italic;text-decoration:underline;text-underline-offset:2px;text-decoration-color:#6d7a8a;">https:</span><span style="color:#a8c023;font-style:italic;text-decoration:underline;text-underline-offset:2px;text-decoration-color:#6d7a8a">//doc.youzanyun.com/detail/API/0/5</span><span style="color:#a8c023;"> 响应的 </span><span style="color:#a8c023;font-style:italic;">data</span></div>
<div class="mono" style="left:622.2px;top:205px"><span style="color:#a9b7c6;">List&lt;ExpressTrackRespDTO&gt; </span><span style="color:#ffc66d;">getExpressTrackList</span><span style="color:#a9b7c6;">(ExpressTrackQueryReqDTO reqDTO)</span><span style="color:#cc7832;">;</span></div>
<div class="mono" style="left:591px;top:249px"><span style="color:#a9b7c6;">}</span></div>
<div class="a" style="left:522px;top:278px;width:974px;height:40px;background:#3c3f41"></div>
<div class="a" style="left:522px;top:318px;width:974px;height:1px;background:#323232"></div>
<div class="a" style="left:522px;top:278px;width:149px;height:38px;background:#4b4740"></div>
<div class="a" style="left:522px;top:316px;width:149px;height:3px;background:#777b80"></div>
<svg style="left:534px;top:290px" width="16" height="16" viewBox="0 0 16 16"><path d="M1.5 2 H14.5 M1.5 14 H14.5" stroke="#cfd1d4" stroke-width="1.2"/><path d="M5 12.5 V5 M3 7 L5 5 L7 7 M11 12.5 V5 M9 7 L11 5 L13 7" fill="none" stroke="#4a8af0" stroke-width="1.1"/></svg>
<div class="tt" style="left:555px;top:290px;color:#cfd1d4;font-size:13.5px">ExpressClient</div>
<svg style="left:651px;top:294px" width="8" height="8" viewBox="0 0 8 8"><path d="M1 1 L7 7 M7 1 L1 7" stroke="#7f8286" stroke-width="1.1"/></svg>
<div class="a" style="left:522px;top:319px;width:974px;height:26px;background:#3c3f41"></div>
<svg style="left:526.0px;top:323.0px" width="18" height="18" viewBox="0 0 18 18"><circle cx="9" cy="9" r="6.8" fill="#4a3426" stroke="#c9773b" stroke-width="1.3"/><text x="9" y="13" font-size="10" font-weight="bold" text-anchor="middle" fill="#c9773b" font-family="Liberation Sans">f</text></svg>
<svg style="left:552.0px;top:323.0px" width="18" height="18" viewBox="0 0 18 18"><circle cx="9" cy="9" r="6.8" fill="#4a2a2a" stroke="#d2504f" stroke-width="1.3"/><text x="9" y="12.5" font-size="10" font-weight="bold" text-anchor="middle" fill="#d2504f" font-family="Liberation Sans">m</text><path d="M13.5 11 L14.4 13.2 L16.7 13.3 L14.9 14.7 L15.5 17 L13.5 15.7 L11.5 17 L12.1 14.7 L10.3 13.3 L12.6 13.2 Z" fill="#e8e8e8"/></svg>
<svg style="left:578.0px;top:323.0px" width="18" height="18" viewBox="0 0 18 18"><circle cx="9" cy="9" r="6.8" fill="#4a2a2a" stroke="#d2504f" stroke-width="1.3"/><text x="9" y="12.5" font-size="10" font-weight="bold" text-anchor="middle" fill="#d2504f" font-family="Liberation Sans">m</text></svg>
<svg style="left:604.0px;top:323.0px" width="18" height="18" viewBox="0 0 18 18"><circle cx="9" cy="9" r="6.8" fill="#3a2f47" stroke="#a66fd6" stroke-width="1.3"/><text x="9" y="12.5" font-size="10" font-weight="bold" text-anchor="middle" fill="#a66fd6" font-family="Liberation Sans">p</text></svg>
<svg style="left:630.0px;top:323.0px" width="18" height="18" viewBox="0 0 18 18"><circle cx="9" cy="9" r="6.8" fill="#253252" stroke="#4a82e0" stroke-width="1.3"/><path d="M7 5.3 H11 M9 5.3 V12.7 M7 12.7 H11" stroke="#6b9ef0" stroke-width="1.5"/></svg>
<svg style="left:656.0px;top:323.0px" width="18" height="18" viewBox="0 0 18 18"><path d="M8 5.5 L10 3.5 Q12 1.5 14 3.5 Q16 5.5 14 7.5 L12 9.5 M10 12.5 L8 14.5 Q6 16.5 4 14.5 Q2 12.5 4 10.5 L6 8.5 M6.5 11.5 L11.5 6.5" fill="none" stroke="#c4c7cb" stroke-width="1.4"/></svg>
<svg style="left:682.0px;top:323.0px" width="20" height="18" viewBox="0 0 20 18"><path d="M4 2 V15 M1.5 12.5 L4 15 L6.5 12.5" fill="none" stroke="#c4c7cb" stroke-width="1.3"/><rect x="9" y="2.5" width="4" height="3.5" rx="0.8" fill="none" stroke="#c4c7cb" stroke-width="1.2"/><rect x="9" y="8.5" width="4" height="3.5" rx="0.8" fill="none" stroke="#c4c7cb" stroke-width="1.2"/><path d="M15 17 H18 V14 Z" fill="#c4c7cb"/></svg>
<svg style="left:707.0px;top:323.0px" width="20" height="18" viewBox="0 0 20 18"><path d="M1 9 Q8 1 15 9 Q8 17 1 9 Z" fill="none" stroke="#c4c7cb" stroke-width="1.3"/><circle cx="8" cy="9" r="2.5" fill="none" stroke="#c4c7cb" stroke-width="1.3"/><path d="M15 17 H18 V14 Z" fill="#c4c7cb"/></svg>
<svg style="left:734.0px;top:323.0px" width="20" height="18" viewBox="0 0 20 18"><path d="M2 3 H14 L9.5 9 V15 L6.5 13.5 V9 Z" fill="none" stroke="#c4c7cb" stroke-width="1.3"/><path d="M15 17 H18 V14 Z" fill="#c4c7cb"/></svg>
<div class="a" style="left:759px;top:322px;width:1px;height:20px;background:#4e5155"></div>
<div class="a" style="left:792px;top:322px;width:1px;height:20px;background:#4e5155"></div>
<div class="a" style="left:903px;top:322px;width:1px;height:20px;background:#4e5155"></div>
<div class="a" style="left:963px;top:322px;width:1px;height:20px;background:#4e5155"></div>
<div class="a" style="left:1047px;top:322px;width:1px;height:20px;background:#4e5155"></div>
<svg style="left:766.0px;top:323.0px" width="18" height="18" viewBox="0 0 18 18"><circle cx="3.5" cy="4" r="1.8" fill="none" stroke="#c4c7cb" stroke-width="1.2"/><circle cx="14" cy="14" r="1.8" fill="none" stroke="#c4c7cb" stroke-width="1.2"/><path d="M5 5.5 Q9 9 8 11 Q8 13.5 12.2 13.8" fill="none" stroke="#c4c7cb" stroke-width="1.2"/></svg>
<svg style="left:799.5px;top:323.0px" width="18" height="18" viewBox="0 0 18 18"><circle cx="9" cy="9" r="6.8" fill="none" stroke="#c4c7cb" stroke-width="1.3"/><path d="M5.5 9 H12.5 M9 5.5 V12.5" stroke="#c4c7cb" stroke-width="1.6"/></svg>
<svg style="left:825.5px;top:323.0px" width="18" height="18" viewBox="0 0 18 18"><circle cx="9" cy="9" r="6.8" fill="none" stroke="#c4c7cb" stroke-width="1.3"/><path d="M5.5 9 H12.5" stroke="#c4c7cb" stroke-width="1.6"/></svg>
<div class="a" style="left:852px;top:325px;font-size:12px;font-weight:bold;color:#c4c7cb;line-height:14px">1:1</div>
<svg style="left:877.5px;top:323.0px" width="18" height="18" viewBox="0 0 18 18"><rect x="2" y="3" width="14" height="12" rx="1.5" fill="none" stroke="#c4c7cb" stroke-width="1.3"/><path d="M5.5 8 V6.3 H7.5 M12.5 10 V11.7 H10.5" fill="none" stroke="#c4c7cb" stroke-width="1.3"/></svg>
<svg style="left:911.0px;top:323.0px" width="18" height="18" viewBox="0 0 18 18"><rect x="6.5" y="1.5" width="5" height="4.5" fill="none" stroke="#c4c7cb" stroke-width="1.2"/><rect x="1.5" y="11.5" width="5" height="4.5" fill="none" stroke="#c4c7cb" stroke-width="1.2"/><rect x="11.5" y="11.5" width="5" height="4.5" fill="none" stroke="#c4c7cb" stroke-width="1.2"/><path d="M9 6 V9 H4 V11.5 M9 9 H14 V11.5" fill="none" stroke="#c4c7cb" stroke-width="1.2"/></svg>
<svg style="left:937.0px;top:323.0px" width="18" height="18" viewBox="0 0 18 18"><path d="M1 9 H9 M6.5 6.5 L9 9 L6.5 11.5 M15 3.5 H12.5 V14.5 H15" fill="none" stroke="#c4c7cb" stroke-width="1.3"/></svg>
<svg style="left:969.5px;top:323.0px" width="18" height="18" viewBox="0 0 18 18"><rect x="2.5" y="4.5" width="10" height="11" rx="1.5" fill="none" stroke="#c4c7cb" stroke-width="1.2"/><path d="M5 2.5 H13.5 Q14.5 2.5 14.5 3.5 V12.5" fill="none" stroke="#c4c7cb" stroke-width="1.2"/><path d="M5 8 H10 M5 10.5 H10 M5 13 H10" stroke="#c4c7cb" stroke-width="1.1"/></svg>
<svg style="left:996.0px;top:323.0px" width="18" height="18" viewBox="0 0 18 18"><path d="M2 4 H14 M2 7 H14 M2 10 H10 M2 13 H10" stroke="#c4c7cb" stroke-width="1.2"/><path d="M11.5 10 H15.5 M13.5 10 V16 M11.5 16 H15.5" stroke="#c4c7cb" stroke-width="1.1"/></svg>
<svg style="left:1023.0px;top:323.0px" width="18" height="18" viewBox="0 0 18 18"><path d="M2 7 V15 H11" fill="none" stroke="#c4c7cb" stroke-width="1.3"/><path d="M6 11 L14 3 M9.5 3 H14 V7.5" fill="none" stroke="#c4c7cb" stroke-width="1.3"/><path d="M14 17 H17 V14 Z" fill="#c4c7cb"/></svg>
<svg style="left:1055.0px;top:323.0px" width="18" height="18" viewBox="0 0 18 18"><path d="M3 9 Q3 3.5 9 3.5 Q12 3.5 14 6 M15 9 Q15 14.5 9 14.5 Q6 14.5 4 12" fill="none" stroke="#c4c7cb" stroke-width="1.3"/><path d="M14.8 3.2 V6.6 H11.4 M3.2 14.8 V11.4 H6.6" fill="none" stroke="#c4c7cb" stroke-width="1.3"/></svg>
<svg style="left:1081.0px;top:323.0px" width="18" height="18" viewBox="0 0 18 18"><path d="M9 1.8 L11 3.3 L13.5 3 L14.3 5.5 L16.3 7 L15.5 9.3 L16.3 11.5 L14.3 13 L13.5 15.5 L11 15.2 L9 16.7 L7 15.2 L4.5 15.5 L3.7 13 L1.7 11.5 L2.5 9.3 L1.7 7 L3.7 5.5 L4.5 3 L7 3.3 Z" fill="none" stroke="#c4c7cb" stroke-width="1.2" stroke-linejoin="round"/><circle cx="9" cy="9.2" r="2.6" fill="none" stroke="#c4c7cb" stroke-width="1.2"/></svg>
<div class="a" style="left:1110px;top:323px;font-size:16px;color:#c4c7cb;line-height:18px">?</div>
<div class="a" style="left:522px;top:345px;width:974px;height:402px;background:#2b2b2b"></div>
<svg style="left:522px;top:345px" width="974" height="402" viewBox="0 0 974 402"><line x1="32.5" y1="0" x2="32.5" y2="402" stroke="#383838" stroke-width="1" stroke-dasharray="1 1" shape-rendering="crispEdges"/><line x1="33.5" y1="1" x2="33.5" y2="402" stroke="#383838" stroke-width="1" stroke-dasharray="1 1" shape-rendering="crispEdges"/><line x1="152.5" y1="0" x2="152.5" y2="402" stroke="#383838" stroke-width="1" stroke-dasharray="1 1" shape-rendering="crispEdges"/><line x1="153.5" y1="1" x2="153.5" y2="402" stroke="#383838" stroke-width="1" stroke-dasharray="1 1" shape-rendering="crispEdges"/><line x1="272.5" y1="0" x2="272.5" y2="402" stroke="#383838" stroke-width="1" stroke-dasharray="1 1" shape-rendering="crispEdges"/><line x1="273.5" y1="1" x2="273.5" y2="402" stroke="#383838" stroke-width="1" stroke-dasharray="1 1" shape-rendering="crispEdges"/><line x1="392.5" y1="0" x2="392.5" y2="402" stroke="#383838" stroke-width="1" stroke-dasharray="1 1" shape-rendering="crispEdges"/><line x1="393.5" y1="1" x2="393.5" y2="402" stroke="#383838" stroke-width="1" stroke-dasharray="1 1" shape-rendering="crispEdges"/><line x1="512.5" y1="0" x2="512.5" y2="402" stroke="#383838" stroke-width="1" stroke-dasharray="1 1" shape-rendering="crispEdges"/><line x1="513.5" y1="1" x2="513.5" y2="402" stroke="#383838" stroke-width="1" stroke-dasharray="1 1" shape-rendering="crispEdges"/><line x1="632.5" y1="0" x2="632.5" y2="402" stroke="#383838" stroke-width="1" stroke-dasharray="1 1" shape-rendering="crispEdges"/><line x1="633.5" y1="1" x2="633.5" y2="402" stroke="#383838" stroke-width="1" stroke-dasharray="1 1" shape-rendering="crispEdges"/><line x1="752.5" y1="0" x2="752.5" y2="402" stroke="#383838" stroke-width="1" stroke-dasharray="1 1" shape-rendering="crispEdges"/><line x1="753.5" y1="1" x2="753.5" y2="402" stroke="#383838" stroke-width="1" stroke-dasharray="1 1" shape-rendering="crispEdges"/><line x1="872.5" y1="0" x2="872.5" y2="402" stroke="#383838" stroke-width="1" stroke-dasharray="1 1" shape-rendering="crispEdges"/><line x1="873.5" y1="1" x2="873.5" y2="402" stroke="#383838" stroke-width="1" stroke-dasharray="1 1" shape-rendering="crispEdges"/><line x1="0" y1="74.5" x2="974" y2="74.5" stroke="#383838" stroke-width="1" stroke-dasharray="1 1" shape-rendering="crispEdges"/><line x1="1" y1="75.5" x2="974" y2="75.5" stroke="#383838" stroke-width="1" stroke-dasharray="1 1" shape-rendering="crispEdges"/><line x1="0" y1="194.5" x2="974" y2="194.5" stroke="#383838" stroke-width="1" stroke-dasharray="1 1" shape-rendering="crispEdges"/><line x1="1" y1="195.5" x2="974" y2="195.5" stroke="#383838" stroke-width="1" stroke-dasharray="1 1" shape-rendering="crispEdges"/><line x1="0" y1="314.5" x2="974" y2="314.5" stroke="#383838" stroke-width="1" stroke-dasharray="1 1" shape-rendering="crispEdges"/><line x1="1" y1="315.5" x2="974" y2="315.5" stroke="#383838" stroke-width="1" stroke-dasharray="1 1" shape-rendering="crispEdges"/><path d="M2 14h1v1h-1z M4 14h1v1h-1z M3 13h1v1h-1z M3 15h1v1h-1z M2 44h1v1h-1z M4 44h1v1h-1z M3 43h1v1h-1z M3 45h1v1h-1z M2 74h1v1h-1z M4 74h1v1h-1z M3 73h1v1h-1z M3 75h1v1h-1z M2 104h1v1h-1z M4 104h1v1h-1z M3 103h1v1h-1z M3 105h1v1h-1z M2 134h1v1h-1z M4 134h1v1h-1z M3 133h1v1h-1z M3 135h1v1h-1z M2 164h1v1h-1z M4 164h1v1h-1z M3 163h1v1h-1z M3 165h1v1h-1z M2 194h1v1h-1z M4 194h1v1h-1z M3 193h1v1h-1z M3 195h1v1h-1z M2 224h1v1h-1z M4 224h1v1h-1z M3 223h1v1h-1z M3 225h1v1h-1z M2 254h1v1h-1z M4 254h1v1h-1z M3 253h1v1h-1z M3 255h1v1h-1z M2 284h1v1h-1z M4 284h1v1h-1z M3 283h1v1h-1z M3 285h1v1h-1z M2 314h1v1h-1z M4 314h1v1h-1z M3 313h1v1h-1z M3 315h1v1h-1z M2 344h1v1h-1z M4 344h1v1h-1z M3 343h1v1h-1z M3 345h1v1h-1z M2 374h1v1h-1z M4 374h1v1h-1z M3 373h1v1h-1z M3 375h1v1h-1z M32 14h1v1h-1z M34 14h1v1h-1z M33 13h1v1h-1z M33 15h1v1h-1z M32 44h1v1h-1z M34 44h1v1h-1z M33 43h1v1h-1z M33 45h1v1h-1z M32 74h1v1h-1z M34 74h1v1h-1z M33 73h1v1h-1z M33 75h1v1h-1z M32 104h1v1h-1z M34 104h1v1h-1z M33 103h1v1h-1z M33 105h1v1h-1z M32 134h1v1h-1z M34 134h1v1h-1z M33 133h1v1h-1z M33 135h1v1h-1z M32 164h1v1h-1z M34 164h1v1h-1z M33 163h1v1h-1z M33 165h1v1h-1z M32 194h1v1h-1z M34 194h1v1h-1z M33 193h1v1h-1z M33 195h1v1h-1z M32 224h1v1h-1z M34 224h1v1h-1z M33 223h1v1h-1z M33 225h1v1h-1z M32 254h1v1h-1z M34 254h1v1h-1z M33 253h1v1h-1z M33 255h1v1h-1z M32 284h1v1h-1z M34 284h1v1h-1z M33 283h1v1h-1z M33 285h1v1h-1z M32 314h1v1h-1z M34 314h1v1h-1z M33 313h1v1h-1z M33 315h1v1h-1z M32 344h1v1h-1z M34 344h1v1h-1z M33 343h1v1h-1z M33 345h1v1h-1z M32 374h1v1h-1z M34 374h1v1h-1z M33 373h1v1h-1z M33 375h1v1h-1z M62 14h1v1h-1z M64 14h1v1h-1z M63 13h1v1h-1z M63 15h1v1h-1z M62 44h1v1h-1z M64 44h1v1h-1z M63 43h1v1h-1z M63 45h1v1h-1z M62 74h1v1h-1z M64 74h1v1h-1z M63 73h1v1h-1z M63 75h1v1h-1z M62 104h1v1h-1z M64 104h1v1h-1z M63 103h1v1h-1z M63 105h1v1h-1z M62 134h1v1h-1z M64 134h1v1h-1z M63 133h1v1h-1z M63 135h1v1h-1z M62 164h1v1h-1z M64 164h1v1h-1z M63 163h1v1h-1z M63 165h1v1h-1z M62 194h1v1h-1z M64 194h1v1h-1z M63 193h1v1h-1z M63 195h1v1h-1z M62 224h1v1h-1z M64 224h1v1h-1z M63 223h1v1h-1z M63 225h1v1h-1z M62 254h1v1h-1z M64 254h1v1h-1z M63 253h1v1h-1z M63 255h1v1h-1z M62 284h1v1h-1z M64 284h1v1h-1z M63 283h1v1h-1z M63 285h1v1h-1z M62 314h1v1h-1z M64 314h1v1h-1z M63 313h1v1h-1z M63 315h1v1h-1z M62 344h1v1h-1z M64 344h1v1h-1z M63 343h1v1h-1z M63 345h1v1h-1z M62 374h1v1h-1z M64 374h1v1h-1z M63 373h1v1h-1z M63 375h1v1h-1z M92 14h1v1h-1z M94 14h1v1h-1z M93 13h1v1h-1z M93 15h1v1h-1z M92 44h1v1h-1z M94 44h1v1h-1z M93 43h1v1h-1z M93 45h1v1h-1z M92 74h1v1h-1z M94 74h1v1h-1z M93 73h1v1h-1z M93 75h1v1h-1z M92 104h1v1h-1z M94 104h1v1h-1z M93 103h1v1h-1z M93 105h1v1h-1z M92 134h1v1h-1z M94 134h1v1h-1z M93 133h1v1h-1z M93 135h1v1h-1z M92 164h1v1h-1z M94 164h1v1h-1z M93 163h1v1h-1z M93 165h1v1h-1z M92 194h1v1h-1z M94 194h1v1h-1z M93 193h1v1h-1z M93 195h1v1h-1z M92 224h1v1h-1z M94 224h1v1h-1z M93 223h1v1h-1z M93 225h1v1h-1z M92 254h1v1h-1z M94 254h1v1h-1z M93 253h1v1h-1z M93 255h1v1h-1z M92 284h1v1h-1z M94 284h1v1h-1z M93 283h1v1h-1z M93 285h1v1h-1z M92 314h1v1h-1z M94 314h1v1h-1z M93 313h1v1h-1z M93 315h1v1h-1z M92 344h1v1h-1z M94 344h1v1h-1z M93 343h1v1h-1z M93 345h1v1h-1z M92 374h1v1h-1z M94 374h1v1h-1z M93 373h1v1h-1z M93 375h1v1h-1z M122 14h1v1h-1z M124 14h1v1h-1z M123 13h1v1h-1z M123 15h1v1h-1z M122 44h1v1h-1z M124 44h1v1h-1z M123 43h1v1h-1z M123 45h1v1h-1z M122 74h1v1h-1z M124 74h1v1h-1z M123 73h1v1h-1z M123 75h1v1h-1z M122 104h1v1h-1z M124 104h1v1h-1z M123 103h1v1h-1z M123 105h1v1h-1z M122 134h1v1h-1z M124 134h1v1h-1z M123 133h1v1h-1z M123 135h1v1h-1z M122 164h1v1h-1z M124 164h1v1h-1z M123 163h1v1h-1z M123 165h1v1h-1z M122 194h1v1h-1z M124 194h1v1h-1z M123 193h1v1h-1z M123 195h1v1h-1z M122 224h1v1h-1z M124 224h1v1h-1z M123 223h1v1h-1z M123 225h1v1h-1z M122 254h1v1h-1z M124 254h1v1h-1z M123 253h1v1h-1z M123 255h1v1h-1z M122 284h1v1h-1z M124 284h1v1h-1z M123 283h1v1h-1z M123 285h1v1h-1z M122 314h1v1h-1z M124 314h1v1h-1z M123 313h1v1h-1z M123 315h1v1h-1z M122 344h1v1h-1z M124 344h1v1h-1z M123 343h1v1h-1z M123 345h1v1h-1z M122 374h1v1h-1z M124 374h1v1h-1z M123 373h1v1h-1z M123 375h1v1h-1z M152 14h1v1h-1z M154 14h1v1h-1z M153 13h1v1h-1z M153 15h1v1h-1z M152 44h1v1h-1z M154 44h1v1h-1z M153 43h1v1h-1z M153 45h1v1h-1z M152 74h1v1h-1z M154 74h1v1h-1z M153 73h1v1h-1z M153 75h1v1h-1z M152 104h1v1h-1z M154 104h1v1h-1z M153 103h1v1h-1z M153 105h1v1h-1z M152 134h1v1h-1z M154 134h1v1h-1z M153 133h1v1h-1z M153 135h1v1h-1z M152 164h1v1h-1z M154 164h1v1h-1z M153 163h1v1h-1z M153 165h1v1h-1z M152 194h1v1h-1z M154 194h1v1h-1z M153 193h1v1h-1z M153 195h1v1h-1z M152 224h1v1h-1z M154 224h1v1h-1z M153 223h1v1h-1z M153 225h1v1h-1z M152 254h1v1h-1z M154 254h1v1h-1z M153 253h1v1h-1z M153 255h1v1h-1z M152 284h1v1h-1z M154 284h1v1h-1z M153 283h1v1h-1z M153 285h1v1h-1z M152 314h1v1h-1z M154 314h1v1h-1z M153 313h1v1h-1z M153 315h1v1h-1z M152 344h1v1h-1z M154 344h1v1h-1z M153 343h1v1h-1z M153 345h1v1h-1z M152 374h1v1h-1z M154 374h1v1h-1z M153 373h1v1h-1z M153 375h1v1h-1z M182 14h1v1h-1z M184 14h1v1h-1z M183 13h1v1h-1z M183 15h1v1h-1z M182 44h1v1h-1z M184 44h1v1h-1z M183 43h1v1h-1z M183 45h1v1h-1z M182 74h1v1h-1z M184 74h1v1h-1z M183 73h1v1h-1z M183 75h1v1h-1z M182 104h1v1h-1z M184 104h1v1h-1z M183 103h1v1h-1z M183 105h1v1h-1z M182 134h1v1h-1z M184 134h1v1h-1z M183 133h1v1h-1z M183 135h1v1h-1z M182 164h1v1h-1z M184 164h1v1h-1z M183 163h1v1h-1z M183 165h1v1h-1z M182 194h1v1h-1z M184 194h1v1h-1z M183 193h1v1h-1z M183 195h1v1h-1z M182 224h1v1h-1z M184 224h1v1h-1z M183 223h1v1h-1z M183 225h1v1h-1z M182 254h1v1h-1z M184 254h1v1h-1z M183 253h1v1h-1z M183 255h1v1h-1z M182 284h1v1h-1z M184 284h1v1h-1z M183 283h1v1h-1z M183 285h1v1h-1z M182 314h1v1h-1z M184 314h1v1h-1z M183 313h1v1h-1z M183 315h1v1h-1z M182 344h1v1h-1z M184 344h1v1h-1z M183 343h1v1h-1z M183 345h1v1h-1z M182 374h1v1h-1z M184 374h1v1h-1z M183 373h1v1h-1z M183 375h1v1h-1z M212 14h1v1h-1z M214 14h1v1h-1z M213 13h1v1h-1z M213 15h1v1h-1z M212 44h1v1h-1z M214 44h1v1h-1z M213 43h1v1h-1z M213 45h1v1h-1z M212 74h1v1h-1z M214 74h1v1h-1z M213 73h1v1h-1z M213 75h1v1h-1z M212 104h1v1h-1z M214 104h1v1h-1z M213 103h1v1h-1z M213 105h1v1h-1z M212 134h1v1h-1z M214 134h1v1h-1z M213 133h1v1h-1z M213 135h1v1h-1z M212 164h1v1h-1z M214 164h1v1h-1z M213 163h1v1h-1z M213 165h1v1h-1z M212 194h1v1h-1z M214 194h1v1h-1z M213 193h1v1h-1z M213 195h1v1h-1z M212 224h1v1h-1z M214 224h1v1h-1z M213 223h1v1h-1z M213 225h1v1h-1z M212 254h1v1h-1z M214 254h1v1h-1z M213 253h1v1h-1z M213 255h1v1h-1z M212 284h1v1h-1z M214 284h1v1h-1z M213 283h1v1h-1z M213 285h1v1h-1z M212 314h1v1h-1z M214 314h1v1h-1z M213 313h1v1h-1z M213 315h1v1h-1z M212 344h1v1h-1z M214 344h1v1h-1z M213 343h1v1h-1z M213 345h1v1h-1z M212 374h1v1h-1z M214 374h1v1h-1z M213 373h1v1h-1z M213 375h1v1h-1z M242 14h1v1h-1z M244 14h1v1h-1z M243 13h1v1h-1z M243 15h1v1h-1z M242 44h1v1h-1z M244 44h1v1h-1z M243 43h1v1h-1z M243 45h1v1h-1z M242 74h1v1h-1z M244 74h1v1h-1z M243 73h1v1h-1z M243 75h1v1h-1z M242 104h1v1h-1z M244 104h1v1h-1z M243 103h1v1h-1z M243 105h1v1h-1z M242 134h1v1h-1z M244 134h1v1h-1z M243 133h1v1h-1z M243 135h1v1h-1z M242 164h1v1h-1z M244 164h1v1h-1z M243 163h1v1h-1z M243 165h1v1h-1z M242 194h1v1h-1z M244 194h1v1h-1z M243 193h1v1h-1z M243 195h1v1h-1z M242 224h1v1h-1z M244 224h1v1h-1z M243 223h1v1h-1z M243 225h1v1h-1z M242 254h1v1h-1z M244 254h1v1h-1z M243 253h1v1h-1z M243 255h1v1h-1z M242 284h1v1h-1z M244 284h1v1h-1z M243 283h1v1h-1z M243 285h1v1h-1z M242 314h1v1h-1z M244 314h1v1h-1z M243 313h1v1h-1z M243 315h1v1h-1z M242 344h1v1h-1z M244 344h1v1h-1z M243 343h1v1h-1z M243 345h1v1h-1z M242 374h1v1h-1z M244 374h1v1h-1z M243 373h1v1h-1z M243 375h1v1h-1z M272 14h1v1h-1z M274 14h1v1h-1z M273 13h1v1h-1z M273 15h1v1h-1z M272 44h1v1h-1z M274 44h1v1h-1z M273 43h1v1h-1z M273 45h1v1h-1z M272 74h1v1h-1z M274 74h1v1h-1z M273 73h1v1h-1z M273 75h1v1h-1z M272 104h1v1h-1z M274 104h1v1h-1z M273 103h1v1h-1z M273 105h1v1h-1z M272 134h1v1h-1z M274 134h1v1h-1z M273 133h1v1h-1z M273 135h1v1h-1z M272 164h1v1h-1z M274 164h1v1h-1z M273 163h1v1h-1z M273 165h1v1h-1z M272 194h1v1h-1z M274 194h1v1h-1z M273 193h1v1h-1z M273 195h1v1h-1z M272 224h1v1h-1z M274 224h1v1h-1z M273 223h1v1h-1z M273 225h1v1h-1z M272 254h1v1h-1z M274 254h1v1h-1z M273 253h1v1h-1z M273 255h1v1h-1z M272 284h1v1h-1z M274 284h1v1h-1z M273 283h1v1h-1z M273 285h1v1h-1z M272 314h1v1h-1z M274 314h1v1h-1z M273 313h1v1h-1z M273 315h1v1h-1z M272 344h1v1h-1z M274 344h1v1h-1z M273 343h1v1h-1z M273 345h1v1h-1z M272 374h1v1h-1z M274 374h1v1h-1z M273 373h1v1h-1z M273 375h1v1h-1z M302 14h1v1h-1z M304 14h1v1h-1z M303 13h1v1h-1z M303 15h1v1h-1z M302 44h1v1h-1z M304 44h1v1h-1z M303 43h1v1h-1z M303 45h1v1h-1z M302 74h1v1h-1z M304 74h1v1h-1z M303 73h1v1h-1z M303 75h1v1h-1z M302 104h1v1h-1z M304 104h1v1h-1z M303 103h1v1h-1z M303 105h1v1h-1z M302 134h1v1h-1z M304 134h1v1h-1z M303 133h1v1h-1z M303 135h1v1h-1z M302 164h1v1h-1z M304 164h1v1h-1z M303 163h1v1h-1z M303 165h1v1h-1z M302 194h1v1h-1z M304 194h1v1h-1z M303 193h1v1h-1z M303 195h1v1h-1z M302 224h1v1h-1z M304 224h1v1h-1z M303 223h1v1h-1z M303 225h1v1h-1z M302 254h1v1h-1z M304 254h1v1h-1z M303 253h1v1h-1z M303 255h1v1h-1z M302 284h1v1h-1z M304 284h1v1h-1z M303 283h1v1h-1z M303 285h1v1h-1z M302 314h1v1h-1z M304 314h1v1h-1z M303 313h1v1h-1z M303 315h1v1h-1z M302 344h1v1h-1z M304 344h1v1h-1z M303 343h1v1h-1z M303 345h1v1h-1z M302 374h1v1h-1z M304 374h1v1h-1z M303 373h1v1h-1z M303 375h1v1h-1z M332 14h1v1h-1z M334 14h1v1h-1z M333 13h1v1h-1z M333 15h1v1h-1z M332 44h1v1h-1z M334 44h1v1h-1z M333 43h1v1h-1z M333 45h1v1h-1z M332 74h1v1h-1z M334 74h1v1h-1z M333 73h1v1h-1z M333 75h1v1h-1z M332 104h1v1h-1z M334 104h1v1h-1z M333 103h1v1h-1z M333 105h1v1h-1z M332 134h1v1h-1z M334 134h1v1h-1z M333 133h1v1h-1z M333 135h1v1h-1z M332 164h1v1h-1z M334 164h1v1h-1z M333 163h1v1h-1z M333 165h1v1h-1z M332 194h1v1h-1z M334 194h1v1h-1z M333 193h1v1h-1z M333 195h1v1h-1z M332 224h1v1h-1z M334 224h1v1h-1z M333 223h1v1h-1z M333 225h1v1h-1z M332 254h1v1h-1z M334 254h1v1h-1z M333 253h1v1h-1z M333 255h1v1h-1z M332 284h1v1h-1z M334 284h1v1h-1z M333 283h1v1h-1z M333 285h1v1h-1z M332 314h1v1h-1z M334 314h1v1h-1z M333 313h1v1h-1z M333 315h1v1h-1z M332 344h1v1h-1z M334 344h1v1h-1z M333 343h1v1h-1z M333 345h1v1h-1z M332 374h1v1h-1z M334 374h1v1h-1z M333 373h1v1h-1z M333 375h1v1h-1z M362 14h1v1h-1z M364 14h1v1h-1z M363 13h1v1h-1z M363 15h1v1h-1z M362 44h1v1h-1z M364 44h1v1h-1z M363 43h1v1h-1z M363 45h1v1h-1z M362 74h1v1h-1z M364 74h1v1h-1z M363 73h1v1h-1z M363 75h1v1h-1z M362 104h1v1h-1z M364 104h1v1h-1z M363 103h1v1h-1z M363 105h1v1h-1z M362 134h1v1h-1z M364 134h1v1h-1z M363 133h1v1h-1z M363 135h1v1h-1z M362 164h1v1h-1z M364 164h1v1h-1z M363 163h1v1h-1z M363 165h1v1h-1z M362 194h1v1h-1z M364 194h1v1h-1z M363 193h1v1h-1z M363 195h1v1h-1z M362 224h1v1h-1z M364 224h1v1h-1z M363 223h1v1h-1z M363 225h1v1h-1z M362 254h1v1h-1z M364 254h1v1h-1z M363 253h1v1h-1z M363 255h1v1h-1z M362 284h1v1h-1z M364 284h1v1h-1z M363 283h1v1h-1z M363 285h1v1h-1z M362 314h1v1h-1z M364 314h1v1h-1z M363 313h1v1h-1z M363 315h1v1h-1z M362 344h1v1h-1z M364 344h1v1h-1z M363 343h1v1h-1z M363 345h1v1h-1z M362 374h1v1h-1z M364 374h1v1h-1z M363 373h1v1h-1z M363 375h1v1h-1z M392 14h1v1h-1z M394 14h1v1h-1z M393 13h1v1h-1z M393 15h1v1h-1z M392 44h1v1h-1z M394 44h1v1h-1z M393 43h1v1h-1z M393 45h1v1h-1z M392 74h1v1h-1z M394 74h1v1h-1z M393 73h1v1h-1z M393 75h1v1h-1z M392 104h1v1h-1z M394 104h1v1h-1z M393 103h1v1h-1z M393 105h1v1h-1z M392 134h1v1h-1z M394 134h1v1h-1z M393 133h1v1h-1z M393 135h1v1h-1z M392 164h1v1h-1z M394 164h1v1h-1z M393 163h1v1h-1z M393 165h1v1h-1z M392 194h1v1h-1z M394 194h1v1h-1z M393 193h1v1h-1z M393 195h1v1h-1z M392 224h1v1h-1z M394 224h1v1h-1z M393 223h1v1h-1z M393 225h1v1h-1z M392 254h1v1h-1z M394 254h1v1h-1z M393 253h1v1h-1z M393 255h1v1h-1z M392 284h1v1h-1z M394 284h1v1h-1z M393 283h1v1h-1z M393 285h1v1h-1z M392 314h1v1h-1z M394 314h1v1h-1z M393 313h1v1h-1z M393 315h1v1h-1z M392 344h1v1h-1z M394 344h1v1h-1z M393 343h1v1h-1z M393 345h1v1h-1z M392 374h1v1h-1z M394 374h1v1h-1z M393 373h1v1h-1z M393 375h1v1h-1z M422 14h1v1h-1z M424 14h1v1h-1z M423 13h1v1h-1z M423 15h1v1h-1z M422 44h1v1h-1z M424 44h1v1h-1z M423 43h1v1h-1z M423 45h1v1h-1z M422 74h1v1h-1z M424 74h1v1h-1z M423 73h1v1h-1z M423 75h1v1h-1z M422 104h1v1h-1z M424 104h1v1h-1z M423 103h1v1h-1z M423 105h1v1h-1z M422 134h1v1h-1z M424 134h1v1h-1z M423 133h1v1h-1z M423 135h1v1h-1z M422 164h1v1h-1z M424 164h1v1h-1z M423 163h1v1h-1z M423 165h1v1h-1z M422 194h1v1h-1z M424 194h1v1h-1z M423 193h1v1h-1z M423 195h1v1h-1z M422 224h1v1h-1z M424 224h1v1h-1z M423 223h1v1h-1z M423 225h1v1h-1z M422 254h1v1h-1z M424 254h1v1h-1z M423 253h1v1h-1z M423 255h1v1h-1z M422 284h1v1h-1z M424 284h1v1h-1z M423 283h1v1h-1z M423 285h1v1h-1z M422 314h1v1h-1z M424 314h1v1h-1z M423 313h1v1h-1z M423 315h1v1h-1z M422 344h1v1h-1z M424 344h1v1h-1z M423 343h1v1h-1z M423 345h1v1h-1z M422 374h1v1h-1z M424 374h1v1h-1z M423 373h1v1h-1z M423 375h1v1h-1z M452 14h1v1h-1z M454 14h1v1h-1z M453 13h1v1h-1z M453 15h1v1h-1z M452 44h1v1h-1z M454 44h1v1h-1z M453 43h1v1h-1z M453 45h1v1h-1z M452 74h1v1h-1z M454 74h1v1h-1z M453 73h1v1h-1z M453 75h1v1h-1z M452 104h1v1h-1z M454 104h1v1h-1z M453 103h1v1h-1z M453 105h1v1h-1z M452 134h1v1h-1z M454 134h1v1h-1z M453 133h1v1h-1z M453 135h1v1h-1z M452 164h1v1h-1z M454 164h1v1h-1z M453 163h1v1h-1z M453 165h1v1h-1z M452 194h1v1h-1z M454 194h1v1h-1z M453 193h1v1h-1z M453 195h1v1h-1z M452 224h1v1h-1z M454 224h1v1h-1z M453 223h1v1h-1z M453 225h1v1h-1z M452 254h1v1h-1z M454 254h1v1h-1z M453 253h1v1h-1z M453 255h1v1h-1z M452 284h1v1h-1z M454 284h1v1h-1z M453 283h1v1h-1z M453 285h1v1h-1z M452 314h1v1h-1z M454 314h1v1h-1z M453 313h1v1h-1z M453 315h1v1h-1z M452 344h1v1h-1z M454 344h1v1h-1z M453 343h1v1h-1z M453 345h1v1h-1z M452 374h1v1h-1z M454 374h1v1h-1z M453 373h1v1h-1z M453 375h1v1h-1z M482 14h1v1h-1z M484 14h1v1h-1z M483 13h1v1h-1z M483 15h1v1h-1z M482 44h1v1h-1z M484 44h1v1h-1z M483 43h1v1h-1z M483 45h1v1h-1z M482 74h1v1h-1z M484 74h1v1h-1z M483 73h1v1h-1z M483 75h1v1h-1z M482 104h1v1h-1z M484 104h1v1h-1z M483 103h1v1h-1z M483 105h1v1h-1z M482 134h1v1h-1z M484 134h1v1h-1z M483 133h1v1h-1z M483 135h1v1h-1z M482 164h1v1h-1z M484 164h1v1h-1z M483 163h1v1h-1z M483 165h1v1h-1z M482 194h1v1h-1z M484 194h1v1h-1z M483 193h1v1h-1z M483 195h1v1h-1z M482 224h1v1h-1z M484 224h1v1h-1z M483 223h1v1h-1z M483 225h1v1h-1z M482 254h1v1h-1z M484 254h1v1h-1z M483 253h1v1h-1z M483 255h1v1h-1z M482 284h1v1h-1z M484 284h1v1h-1z M483 283h1v1h-1z M483 285h1v1h-1z M482 314h1v1h-1z M484 314h1v1h-1z M483 313h1v1h-1z M483 315h1v1h-1z M482 344h1v1h-1z M484 344h1v1h-1z M483 343h1v1h-1z M483 345h1v1h-1z M482 374h1v1h-1z M484 374h1v1h-1z M483 373h1v1h-1z M483 375h1v1h-1z M512 14h1v1h-1z M514 14h1v1h-1z M513 13h1v1h-1z M513 15h1v1h-1z M512 44h1v1h-1z M514 44h1v1h-1z M513 43h1v1h-1z M513 45h1v1h-1z M512 74h1v1h-1z M514 74h1v1h-1z M513 73h1v1h-1z M513 75h1v1h-1z M512 104h1v1h-1z M514 104h1v1h-1z M513 103h1v1h-1z M513 105h1v1h-1z M512 134h1v1h-1z M514 134h1v1h-1z M513 133h1v1h-1z M513 135h1v1h-1z M512 164h1v1h-1z M514 164h1v1h-1z M513 163h1v1h-1z M513 165h1v1h-1z M512 194h1v1h-1z M514 194h1v1h-1z M513 193h1v1h-1z M513 195h1v1h-1z M512 224h1v1h-1z M514 224h1v1h-1z M513 223h1v1h-1z M513 225h1v1h-1z M512 254h1v1h-1z M514 254h1v1h-1z M513 253h1v1h-1z M513 255h1v1h-1z M512 284h1v1h-1z M514 284h1v1h-1z M513 283h1v1h-1z M513 285h1v1h-1z M512 314h1v1h-1z M514 314h1v1h-1z M513 313h1v1h-1z M513 315h1v1h-1z M512 344h1v1h-1z M514 344h1v1h-1z M513 343h1v1h-1z M513 345h1v1h-1z M512 374h1v1h-1z M514 374h1v1h-1z M513 373h1v1h-1z M513 375h1v1h-1z M542 14h1v1h-1z M544 14h1v1h-1z M543 13h1v1h-1z M543 15h1v1h-1z M542 44h1v1h-1z M544 44h1v1h-1z M543 43h1v1h-1z M543 45h1v1h-1z M542 74h1v1h-1z M544 74h1v1h-1z M543 73h1v1h-1z M543 75h1v1h-1z M542 104h1v1h-1z M544 104h1v1h-1z M543 103h1v1h-1z M543 105h1v1h-1z M542 134h1v1h-1z M544 134h1v1h-1z M543 133h1v1h-1z M543 135h1v1h-1z M542 164h1v1h-1z M544 164h1v1h-1z M543 163h1v1h-1z M543 165h1v1h-1z M542 194h1v1h-1z M544 194h1v1h-1z M543 193h1v1h-1z M543 195h1v1h-1z M542 224h1v1h-1z M544 224h1v1h-1z M543 223h1v1h-1z M543 225h1v1h-1z M542 254h1v1h-1z M544 254h1v1h-1z M543 253h1v1h-1z M543 255h1v1h-1z M542 284h1v1h-1z M544 284h1v1h-1z M543 283h1v1h-1z M543 285h1v1h-1z M542 314h1v1h-1z M544 314h1v1h-1z M543 313h1v1h-1z M543 315h1v1h-1z M542 344h1v1h-1z M544 344h1v1h-1z M543 343h1v1h-1z M543 345h1v1h-1z M542 374h1v1h-1z M544 374h1v1h-1z M543 373h1v1h-1z M543 375h1v1h-1z M572 14h1v1h-1z M574 14h1v1h-1z M573 13h1v1h-1z M573 15h1v1h-1z M572 44h1v1h-1z M574 44h1v1h-1z M573 43h1v1h-1z M573 45h1v1h-1z M572 74h1v1h-1z M574 74h1v1h-1z M573 73h1v1h-1z M573 75h1v1h-1z M572 104h1v1h-1z M574 104h1v1h-1z M573 103h1v1h-1z M573 105h1v1h-1z M572 134h1v1h-1z M574 134h1v1h-1z M573 133h1v1h-1z M573 135h1v1h-1z M572 164h1v1h-1z M574 164h1v1h-1z M573 163h1v1h-1z M573 165h1v1h-1z M572 194h1v1h-1z M574 194h1v1h-1z M573 193h1v1h-1z M573 195h1v1h-1z M572 224h1v1h-1z M574 224h1v1h-1z M573 223h1v1h-1z M573 225h1v1h-1z M572 254h1v1h-1z M574 254h1v1h-1z M573 253h1v1h-1z M573 255h1v1h-1z M572 284h1v1h-1z M574 284h1v1h-1z M573 283h1v1h-1z M573 285h1v1h-1z M572 314h1v1h-1z M574 314h1v1h-1z M573 313h1v1h-1z M573 315h1v1h-1z M572 344h1v1h-1z M574 344h1v1h-1z M573 343h1v1h-1z M573 345h1v1h-1z M572 374h1v1h-1z M574 374h1v1h-1z M573 373h1v1h-1z M573 375h1v1h-1z M602 14h1v1h-1z M604 14h1v1h-1z M603 13h1v1h-1z M603 15h1v1h-1z M602 44h1v1h-1z M604 44h1v1h-1z M603 43h1v1h-1z M603 45h1v1h-1z M602 74h1v1h-1z M604 74h1v1h-1z M603 73h1v1h-1z M603 75h1v1h-1z M602 104h1v1h-1z M604 104h1v1h-1z M603 103h1v1h-1z M603 105h1v1h-1z M602 134h1v1h-1z M604 134h1v1h-1z M603 133h1v1h-1z M603 135h1v1h-1z M602 164h1v1h-1z M604 164h1v1h-1z M603 163h1v1h-1z M603 165h1v1h-1z M602 194h1v1h-1z M604 194h1v1h-1z M603 193h1v1h-1z M603 195h1v1h-1z M602 224h1v1h-1z M604 224h1v1h-1z M603 223h1v1h-1z M603 225h1v1h-1z M602 254h1v1h-1z M604 254h1v1h-1z M603 253h1v1h-1z M603 255h1v1h-1z M602 284h1v1h-1z M604 284h1v1h-1z M603 283h1v1h-1z M603 285h1v1h-1z M602 314h1v1h-1z M604 314h1v1h-1z M603 313h1v1h-1z M603 315h1v1h-1z M602 344h1v1h-1z M604 344h1v1h-1z M603 343h1v1h-1z M603 345h1v1h-1z M602 374h1v1h-1z M604 374h1v1h-1z M603 373h1v1h-1z M603 375h1v1h-1z M632 14h1v1h-1z M634 14h1v1h-1z M633 13h1v1h-1z M633 15h1v1h-1z M632 44h1v1h-1z M634 44h1v1h-1z M633 43h1v1h-1z M633 45h1v1h-1z M632 74h1v1h-1z M634 74h1v1h-1z M633 73h1v1h-1z M633 75h1v1h-1z M632 104h1v1h-1z M634 104h1v1h-1z M633 103h1v1h-1z M633 105h1v1h-1z M632 134h1v1h-1z M634 134h1v1h-1z M633 133h1v1h-1z M633 135h1v1h-1z M632 164h1v1h-1z M634 164h1v1h-1z M633 163h1v1h-1z M633 165h1v1h-1z M632 194h1v1h-1z M634 194h1v1h-1z M633 193h1v1h-1z M633 195h1v1h-1z M632 224h1v1h-1z M634 224h1v1h-1z M633 223h1v1h-1z M633 225h1v1h-1z M632 254h1v1h-1z M634 254h1v1h-1z M633 253h1v1h-1z M633 255h1v1h-1z M632 284h1v1h-1z M634 284h1v1h-1z M633 283h1v1h-1z M633 285h1v1h-1z M632 314h1v1h-1z M634 314h1v1h-1z M633 313h1v1h-1z M633 315h1v1h-1z M632 344h1v1h-1z M634 344h1v1h-1z M633 343h1v1h-1z M633 345h1v1h-1z M632 374h1v1h-1z M634 374h1v1h-1z M633 373h1v1h-1z M633 375h1v1h-1z M662 14h1v1h-1z M664 14h1v1h-1z M663 13h1v1h-1z M663 15h1v1h-1z M662 44h1v1h-1z M664 44h1v1h-1z M663 43h1v1h-1z M663 45h1v1h-1z M662 74h1v1h-1z M664 74h1v1h-1z M663 73h1v1h-1z M663 75h1v1h-1z M662 104h1v1h-1z M664 104h1v1h-1z M663 103h1v1h-1z M663 105h1v1h-1z M662 134h1v1h-1z M664 134h1v1h-1z M663 133h1v1h-1z M663 135h1v1h-1z M662 164h1v1h-1z M664 164h1v1h-1z M663 163h1v1h-1z M663 165h1v1h-1z M662 194h1v1h-1z M664 194h1v1h-1z M663 193h1v1h-1z M663 195h1v1h-1z M662 224h1v1h-1z M664 224h1v1h-1z M663 223h1v1h-1z M663 225h1v1h-1z M662 254h1v1h-1z M664 254h1v1h-1z M663 253h1v1h-1z M663 255h1v1h-1z M662 284h1v1h-1z M664 284h1v1h-1z M663 283h1v1h-1z M663 285h1v1h-1z M662 314h1v1h-1z M664 314h1v1h-1z M663 313h1v1h-1z M663 315h1v1h-1z M662 344h1v1h-1z M664 344h1v1h-1z M663 343h1v1h-1z M663 345h1v1h-1z M662 374h1v1h-1z M664 374h1v1h-1z M663 373h1v1h-1z M663 375h1v1h-1z M692 14h1v1h-1z M694 14h1v1h-1z M693 13h1v1h-1z M693 15h1v1h-1z M692 44h1v1h-1z M694 44h1v1h-1z M693 43h1v1h-1z M693 45h1v1h-1z M692 74h1v1h-1z M694 74h1v1h-1z M693 73h1v1h-1z M693 75h1v1h-1z M692 104h1v1h-1z M694 104h1v1h-1z M693 103h1v1h-1z M693 105h1v1h-1z M692 134h1v1h-1z M694 134h1v1h-1z M693 133h1v1h-1z M693 135h1v1h-1z M692 164h1v1h-1z M694 164h1v1h-1z M693 163h1v1h-1z M693 165h1v1h-1z M692 194h1v1h-1z M694 194h1v1h-1z M693 193h1v1h-1z M693 195h1v1h-1z M692 224h1v1h-1z M694 224h1v1h-1z M693 223h1v1h-1z M693 225h1v1h-1z M692 254h1v1h-1z M694 254h1v1h-1z M693 253h1v1h-1z M693 255h1v1h-1z M692 284h1v1h-1z M694 284h1v1h-1z M693 283h1v1h-1z M693 285h1v1h-1z M692 314h1v1h-1z M694 314h1v1h-1z M693 313h1v1h-1z M693 315h1v1h-1z M692 344h1v1h-1z M694 344h1v1h-1z M693 343h1v1h-1z M693 345h1v1h-1z M692 374h1v1h-1z M694 374h1v1h-1z M693 373h1v1h-1z M693 375h1v1h-1z M722 14h1v1h-1z M724 14h1v1h-1z M723 13h1v1h-1z M723 15h1v1h-1z M722 44h1v1h-1z M724 44h1v1h-1z M723 43h1v1h-1z M723 45h1v1h-1z M722 74h1v1h-1z M724 74h1v1h-1z M723 73h1v1h-1z M723 75h1v1h-1z M722 104h1v1h-1z M724 104h1v1h-1z M723 103h1v1h-1z M723 105h1v1h-1z M722 134h1v1h-1z M724 134h1v1h-1z M723 133h1v1h-1z M723 135h1v1h-1z M722 164h1v1h-1z M724 164h1v1h-1z M723 163h1v1h-1z M723 165h1v1h-1z M722 194h1v1h-1z M724 194h1v1h-1z M723 193h1v1h-1z M723 195h1v1h-1z M722 224h1v1h-1z M724 224h1v1h-1z M723 223h1v1h-1z M723 225h1v1h-1z M722 254h1v1h-1z M724 254h1v1h-1z M723 253h1v1h-1z M723 255h1v1h-1z M722 284h1v1h-1z M724 284h1v1h-1z M723 283h1v1h-1z M723 285h1v1h-1z M722 314h1v1h-1z M724 314h1v1h-1z M723 313h1v1h-1z M723 315h1v1h-1z M722 344h1v1h-1z M724 344h1v1h-1z M723 343h1v1h-1z M723 345h1v1h-1z M722 374h1v1h-1z M724 374h1v1h-1z M723 373h1v1h-1z M723 375h1v1h-1z M752 14h1v1h-1z M754 14h1v1h-1z M753 13h1v1h-1z M753 15h1v1h-1z M752 44h1v1h-1z M754 44h1v1h-1z M753 43h1v1h-1z M753 45h1v1h-1z M752 74h1v1h-1z M754 74h1v1h-1z M753 73h1v1h-1z M753 75h1v1h-1z M752 104h1v1h-1z M754 104h1v1h-1z M753 103h1v1h-1z M753 105h1v1h-1z M752 134h1v1h-1z M754 134h1v1h-1z M753 133h1v1h-1z M753 135h1v1h-1z M752 164h1v1h-1z M754 164h1v1h-1z M753 163h1v1h-1z M753 165h1v1h-1z M752 194h1v1h-1z M754 194h1v1h-1z M753 193h1v1h-1z M753 195h1v1h-1z M752 224h1v1h-1z M754 224h1v1h-1z M753 223h1v1h-1z M753 225h1v1h-1z M752 254h1v1h-1z M754 254h1v1h-1z M753 253h1v1h-1z M753 255h1v1h-1z M752 284h1v1h-1z M754 284h1v1h-1z M753 283h1v1h-1z M753 285h1v1h-1z M752 314h1v1h-1z M754 314h1v1h-1z M753 313h1v1h-1z M753 315h1v1h-1z M752 344h1v1h-1z M754 344h1v1h-1z M753 343h1v1h-1z M753 345h1v1h-1z M752 374h1v1h-1z M754 374h1v1h-1z M753 373h1v1h-1z M753 375h1v1h-1z M782 14h1v1h-1z M784 14h1v1h-1z M783 13h1v1h-1z M783 15h1v1h-1z M782 44h1v1h-1z M784 44h1v1h-1z M783 43h1v1h-1z M783 45h1v1h-1z M782 74h1v1h-1z M784 74h1v1h-1z M783 73h1v1h-1z M783 75h1v1h-1z M782 104h1v1h-1z M784 104h1v1h-1z M783 103h1v1h-1z M783 105h1v1h-1z M782 134h1v1h-1z M784 134h1v1h-1z M783 133h1v1h-1z M783 135h1v1h-1z M782 164h1v1h-1z M784 164h1v1h-1z M783 163h1v1h-1z M783 165h1v1h-1z M782 194h1v1h-1z M784 194h1v1h-1z M783 193h1v1h-1z M783 195h1v1h-1z M782 224h1v1h-1z M784 224h1v1h-1z M783 223h1v1h-1z M783 225h1v1h-1z M782 254h1v1h-1z M784 254h1v1h-1z M783 253h1v1h-1z M783 255h1v1h-1z M782 284h1v1h-1z M784 284h1v1h-1z M783 283h1v1h-1z M783 285h1v1h-1z M782 314h1v1h-1z M784 314h1v1h-1z M783 313h1v1h-1z M783 315h1v1h-1z M782 344h1v1h-1z M784 344h1v1h-1z M783 343h1v1h-1z M783 345h1v1h-1z M782 374h1v1h-1z M784 374h1v1h-1z M783 373h1v1h-1z M783 375h1v1h-1z M812 14h1v1h-1z M814 14h1v1h-1z M813 13h1v1h-1z M813 15h1v1h-1z M812 44h1v1h-1z M814 44h1v1h-1z M813 43h1v1h-1z M813 45h1v1h-1z M812 74h1v1h-1z M814 74h1v1h-1z M813 73h1v1h-1z M813 75h1v1h-1z M812 104h1v1h-1z M814 104h1v1h-1z M813 103h1v1h-1z M813 105h1v1h-1z M812 134h1v1h-1z M814 134h1v1h-1z M813 133h1v1h-1z M813 135h1v1h-1z M812 164h1v1h-1z M814 164h1v1h-1z M813 163h1v1h-1z M813 165h1v1h-1z M812 194h1v1h-1z M814 194h1v1h-1z M813 193h1v1h-1z M813 195h1v1h-1z M812 224h1v1h-1z M814 224h1v1h-1z M813 223h1v1h-1z M813 225h1v1h-1z M812 254h1v1h-1z M814 254h1v1h-1z M813 253h1v1h-1z M813 255h1v1h-1z M812 284h1v1h-1z M814 284h1v1h-1z M813 283h1v1h-1z M813 285h1v1h-1z M812 314h1v1h-1z M814 314h1v1h-1z M813 313h1v1h-1z M813 315h1v1h-1z M812 344h1v1h-1z M814 344h1v1h-1z M813 343h1v1h-1z M813 345h1v1h-1z M812 374h1v1h-1z M814 374h1v1h-1z M813 373h1v1h-1z M813 375h1v1h-1z M842 14h1v1h-1z M844 14h1v1h-1z M843 13h1v1h-1z M843 15h1v1h-1z M842 44h1v1h-1z M844 44h1v1h-1z M843 43h1v1h-1z M843 45h1v1h-1z M842 74h1v1h-1z M844 74h1v1h-1z M843 73h1v1h-1z M843 75h1v1h-1z M842 104h1v1h-1z M844 104h1v1h-1z M843 103h1v1h-1z M843 105h1v1h-1z M842 134h1v1h-1z M844 134h1v1h-1z M843 133h1v1h-1z M843 135h1v1h-1z M842 164h1v1h-1z M844 164h1v1h-1z M843 163h1v1h-1z M843 165h1v1h-1z M842 194h1v1h-1z M844 194h1v1h-1z M843 193h1v1h-1z M843 195h1v1h-1z M842 224h1v1h-1z M844 224h1v1h-1z M843 223h1v1h-1z M843 225h1v1h-1z M842 254h1v1h-1z M844 254h1v1h-1z M843 253h1v1h-1z M843 255h1v1h-1z M842 284h1v1h-1z M844 284h1v1h-1z M843 283h1v1h-1z M843 285h1v1h-1z M842 314h1v1h-1z M844 314h1v1h-1z M843 313h1v1h-1z M843 315h1v1h-1z M842 344h1v1h-1z M844 344h1v1h-1z M843 343h1v1h-1z M843 345h1v1h-1z M842 374h1v1h-1z M844 374h1v1h-1z M843 373h1v1h-1z M843 375h1v1h-1z M872 14h1v1h-1z M874 14h1v1h-1z M873 13h1v1h-1z M873 15h1v1h-1z M872 44h1v1h-1z M874 44h1v1h-1z M873 43h1v1h-1z M873 45h1v1h-1z M872 74h1v1h-1z M874 74h1v1h-1z M873 73h1v1h-1z M873 75h1v1h-1z M872 104h1v1h-1z M874 104h1v1h-1z M873 103h1v1h-1z M873 105h1v1h-1z M872 134h1v1h-1z M874 134h1v1h-1z M873 133h1v1h-1z M873 135h1v1h-1z M872 164h1v1h-1z M874 164h1v1h-1z M873 163h1v1h-1z M873 165h1v1h-1z M872 194h1v1h-1z M874 194h1v1h-1z M873 193h1v1h-1z M873 195h1v1h-1z M872 224h1v1h-1z M874 224h1v1h-1z M873 223h1v1h-1z M873 225h1v1h-1z M872 254h1v1h-1z M874 254h1v1h-1z M873 253h1v1h-1z M873 255h1v1h-1z M872 284h1v1h-1z M874 284h1v1h-1z M873 283h1v1h-1z M873 285h1v1h-1z M872 314h1v1h-1z M874 314h1v1h-1z M873 313h1v1h-1z M873 315h1v1h-1z M872 344h1v1h-1z M874 344h1v1h-1z M873 343h1v1h-1z M873 345h1v1h-1z M872 374h1v1h-1z M874 374h1v1h-1z M873 373h1v1h-1z M873 375h1v1h-1z M902 14h1v1h-1z M904 14h1v1h-1z M903 13h1v1h-1z M903 15h1v1h-1z M902 44h1v1h-1z M904 44h1v1h-1z M903 43h1v1h-1z M903 45h1v1h-1z M902 74h1v1h-1z M904 74h1v1h-1z M903 73h1v1h-1z M903 75h1v1h-1z M902 104h1v1h-1z M904 104h1v1h-1z M903 103h1v1h-1z M903 105h1v1h-1z M902 134h1v1h-1z M904 134h1v1h-1z M903 133h1v1h-1z M903 135h1v1h-1z M902 164h1v1h-1z M904 164h1v1h-1z M903 163h1v1h-1z M903 165h1v1h-1z M902 194h1v1h-1z M904 194h1v1h-1z M903 193h1v1h-1z M903 195h1v1h-1z M902 224h1v1h-1z M904 224h1v1h-1z M903 223h1v1h-1z M903 225h1v1h-1z M902 254h1v1h-1z M904 254h1v1h-1z M903 253h1v1h-1z M903 255h1v1h-1z M902 284h1v1h-1z M904 284h1v1h-1z M903 283h1v1h-1z M903 285h1v1h-1z M902 314h1v1h-1z M904 314h1v1h-1z M903 313h1v1h-1z M903 315h1v1h-1z M902 344h1v1h-1z M904 344h1v1h-1z M903 343h1v1h-1z M903 345h1v1h-1z M902 374h1v1h-1z M904 374h1v1h-1z M903 373h1v1h-1z M903 375h1v1h-1z M932 14h1v1h-1z M934 14h1v1h-1z M933 13h1v1h-1z M933 15h1v1h-1z M932 44h1v1h-1z M934 44h1v1h-1z M933 43h1v1h-1z M933 45h1v1h-1z M932 74h1v1h-1z M934 74h1v1h-1z M933 73h1v1h-1z M933 75h1v1h-1z M932 104h1v1h-1z M934 104h1v1h-1z M933 103h1v1h-1z M933 105h1v1h-1z M932 134h1v1h-1z M934 134h1v1h-1z M933 133h1v1h-1z M933 135h1v1h-1z M932 164h1v1h-1z M934 164h1v1h-1z M933 163h1v1h-1z M933 165h1v1h-1z M932 194h1v1h-1z M934 194h1v1h-1z M933 193h1v1h-1z M933 195h1v1h-1z M932 224h1v1h-1z M934 224h1v1h-1z M933 223h1v1h-1z M933 225h1v1h-1z M932 254h1v1h-1z M934 254h1v1h-1z M933 253h1v1h-1z M933 255h1v1h-1z M932 284h1v1h-1z M934 284h1v1h-1z M933 283h1v1h-1z M933 285h1v1h-1z M932 314h1v1h-1z M934 314h1v1h-1z M933 313h1v1h-1z M933 315h1v1h-1z M932 344h1v1h-1z M934 344h1v1h-1z M933 343h1v1h-1z M933 345h1v1h-1z M932 374h1v1h-1z M934 374h1v1h-1z M933 373h1v1h-1z M933 375h1v1h-1z M962 14h1v1h-1z M964 14h1v1h-1z M963 13h1v1h-1z M963 15h1v1h-1z M962 44h1v1h-1z M964 44h1v1h-1z M963 43h1v1h-1z M963 45h1v1h-1z M962 74h1v1h-1z M964 74h1v1h-1z M963 73h1v1h-1z M963 75h1v1h-1z M962 104h1v1h-1z M964 104h1v1h-1z M963 103h1v1h-1z M963 105h1v1h-1z M962 134h1v1h-1z M964 134h1v1h-1z M963 133h1v1h-1z M963 135h1v1h-1z M962 164h1v1h-1z M964 164h1v1h-1z M963 163h1v1h-1z M963 165h1v1h-1z M962 194h1v1h-1z M964 194h1v1h-1z M963 193h1v1h-1z M963 195h1v1h-1z M962 224h1v1h-1z M964 224h1v1h-1z M963 223h1v1h-1z M963 225h1v1h-1z M962 254h1v1h-1z M964 254h1v1h-1z M963 253h1v1h-1z M963 255h1v1h-1z M962 284h1v1h-1z M964 284h1v1h-1z M963 283h1v1h-1z M963 285h1v1h-1z M962 314h1v1h-1z M964 314h1v1h-1z M963 313h1v1h-1z M963 315h1v1h-1z M962 344h1v1h-1z M964 344h1v1h-1z M963 343h1v1h-1z M963 345h1v1h-1z M962 374h1v1h-1z M964 374h1v1h-1z M963 373h1v1h-1z M963 375h1v1h-1z" fill="#383838" shape-rendering="crispEdges"/><path d="M375.5 113 L375.5 325" fill="none" stroke="#5e9e54" stroke-width="1.6" stroke-dasharray="6 4"/><path d="M375.5 183 Q375.5 196 387 196 L574 196 Q585.5 196 585.5 208 L585.5 235" fill="none" stroke="#5e9e54" stroke-width="1.6" stroke-dasharray="6 4"/><path d="M574 196 L783 196 Q794.5 196 794.5 208 L794.5 325" fill="none" stroke="#5e9e54" stroke-width="1.6" stroke-dasharray="6 4"/></svg>
<div class="a" style="left:780px;top:400px;width:236px;height:43px;background:#3c3f41;border:2px solid #c27632"></div><svg style="left:787px;top:410.5px" width="22" height="22" viewBox="0 0 22 22"><circle cx="11" cy="11" r="9.5" fill="#253b27" stroke="#4f9b52" stroke-width="1.8"/><path d="M8.3 6 H13.7 M11 6 V16 M8.3 16 H13.7" stroke="#62a765" stroke-width="2"/></svg><svg style="left:812px;top:412.5px" width="16" height="16" viewBox="0 0 16 16"><path d="M3.5 8 V4.5 Q3.5 2 6 2 Q8.5 2 8.5 4.5" fill="none" stroke="#5aa64f" stroke-width="1.6"/><rect x="5" y="8" width="9" height="7" fill="#5aa64f"/></svg><div class="dn" style="left:843px;top:408.0px">ExpressClient</div>
<div class="a" style="left:930px;top:580px;width:355px;height:43px;background:#3c3f41;border:2px solid #606367"></div><svg style="left:938px;top:590.5px" width="22" height="22" viewBox="0 0 22 22"><circle cx="11" cy="11" r="9.5" fill="#22304f" stroke="#4a7fe0" stroke-width="1.8"/><path d="M14.2 8 Q13 6.3 11 6.3 Q6.5 6.3 6.5 11 Q6.5 15.7 11 15.7 Q13 15.7 14.2 14" fill="none" stroke="#8fb2f0" stroke-width="1.7"/></svg><svg style="left:962px;top:592.5px" width="16" height="16" viewBox="0 0 16 16"><path d="M3.5 8 V4.5 Q3.5 2 6 2 Q8.5 2 8.5 4.5" fill="none" stroke="#5aa64f" stroke-width="1.6"/><rect x="5" y="8" width="9" height="7" fill="#5aa64f"/></svg><div class="dn" style="left:992px;top:588.0px">NoProvideExpressClient</div>
<div class="a" style="left:739px;top:670px;width:318px;height:43px;background:#3c3f41;border:2px solid #606367"></div><svg style="left:747px;top:680.5px" width="22" height="22" viewBox="0 0 22 22"><circle cx="11" cy="11" r="9.5" fill="#22304f" stroke="#4a7fe0" stroke-width="1.8"/><path d="M14.2 8 Q13 6.3 11 6.3 Q6.5 6.3 6.5 11 Q6.5 15.7 11 15.7 Q13 15.7 14.2 14" fill="none" stroke="#8fb2f0" stroke-width="1.7"/></svg><svg style="left:771px;top:682.5px" width="16" height="16" viewBox="0 0 16 16"><path d="M3.5 8 V4.5 Q3.5 2 6 2 Q8.5 2 8.5 4.5" fill="none" stroke="#5aa64f" stroke-width="1.6"/><rect x="5" y="8" width="9" height="7" fill="#5aa64f"/></svg><div class="dn" style="left:801px;top:678.0px">KdNiaoExpressClient</div>
<div class="a" style="left:1164px;top:670px;width:307px;height:43px;background:#3c3f41;border:2px solid #606367"></div><svg style="left:1172px;top:680.5px" width="22" height="22" viewBox="0 0 22 22"><circle cx="11" cy="11" r="9.5" fill="#22304f" stroke="#4a7fe0" stroke-width="1.8"/><path d="M14.2 8 Q13 6.3 11 6.3 Q6.5 6.3 6.5 11 Q6.5 15.7 11 15.7 Q13 15.7 14.2 14" fill="none" stroke="#8fb2f0" stroke-width="1.7"/></svg><svg style="left:1196px;top:682.5px" width="16" height="16" viewBox="0 0 16 16"><path d="M3.5 8 V4.5 Q3.5 2 6 2 Q8.5 2 8.5 4.5" fill="none" stroke="#5aa64f" stroke-width="1.6"/><rect x="5" y="8" width="9" height="7" fill="#5aa64f"/></svg><div class="dn" style="left:1226px;top:678.0px">Kd100ExpressClient</div>
<div class="a" style="left:771px;top:391px;width:8px;height:8px;background:#c9c9c9"></div>
<div class="a" style="left:771px;top:418px;width:8px;height:8px;background:#c9c9c9"></div>
<div class="a" style="left:771px;top:445px;width:8px;height:8px;background:#c9c9c9"></div>
<div class="a" style="left:894px;top:391px;width:8px;height:8px;background:#c9c9c9"></div>
<div class="a" style="left:894px;top:445px;width:8px;height:8px;background:#c9c9c9"></div>
<div class="a" style="left:1017px;top:391px;width:8px;height:8px;background:#c9c9c9"></div>
<div class="a" style="left:1017px;top:418px;width:8px;height:8px;background:#c9c9c9"></div>
<div class="a" style="left:1017px;top:445px;width:8px;height:8px;background:#c9c9c9"></div>
<svg style="left:880px;top:440px" width="36" height="24" viewBox="0 0 36 24"><path d="M17.5 3 L26.5 20 L8.5 20 Z" fill="#5e9e54"/></svg>
<div class="ann" style="left:973px;top:628px">3、空实现，不对接，不查询</div>
<div class="ann" style="left:750px;top:722px">1<span style="margin-right:-2px">、</span>对接<span style="margin-left:5px;margin-right:4px">“</span>快递鸟”</div>
<div class="ann" style="left:1172px;top:719px">2<span style="margin-right:-2px">、</span>对接<span style="margin-left:5px;margin-right:4px">“</span>快递<span style="margin-left:3px;letter-spacing:1.2px">100</span>”</div>
</body></html>
